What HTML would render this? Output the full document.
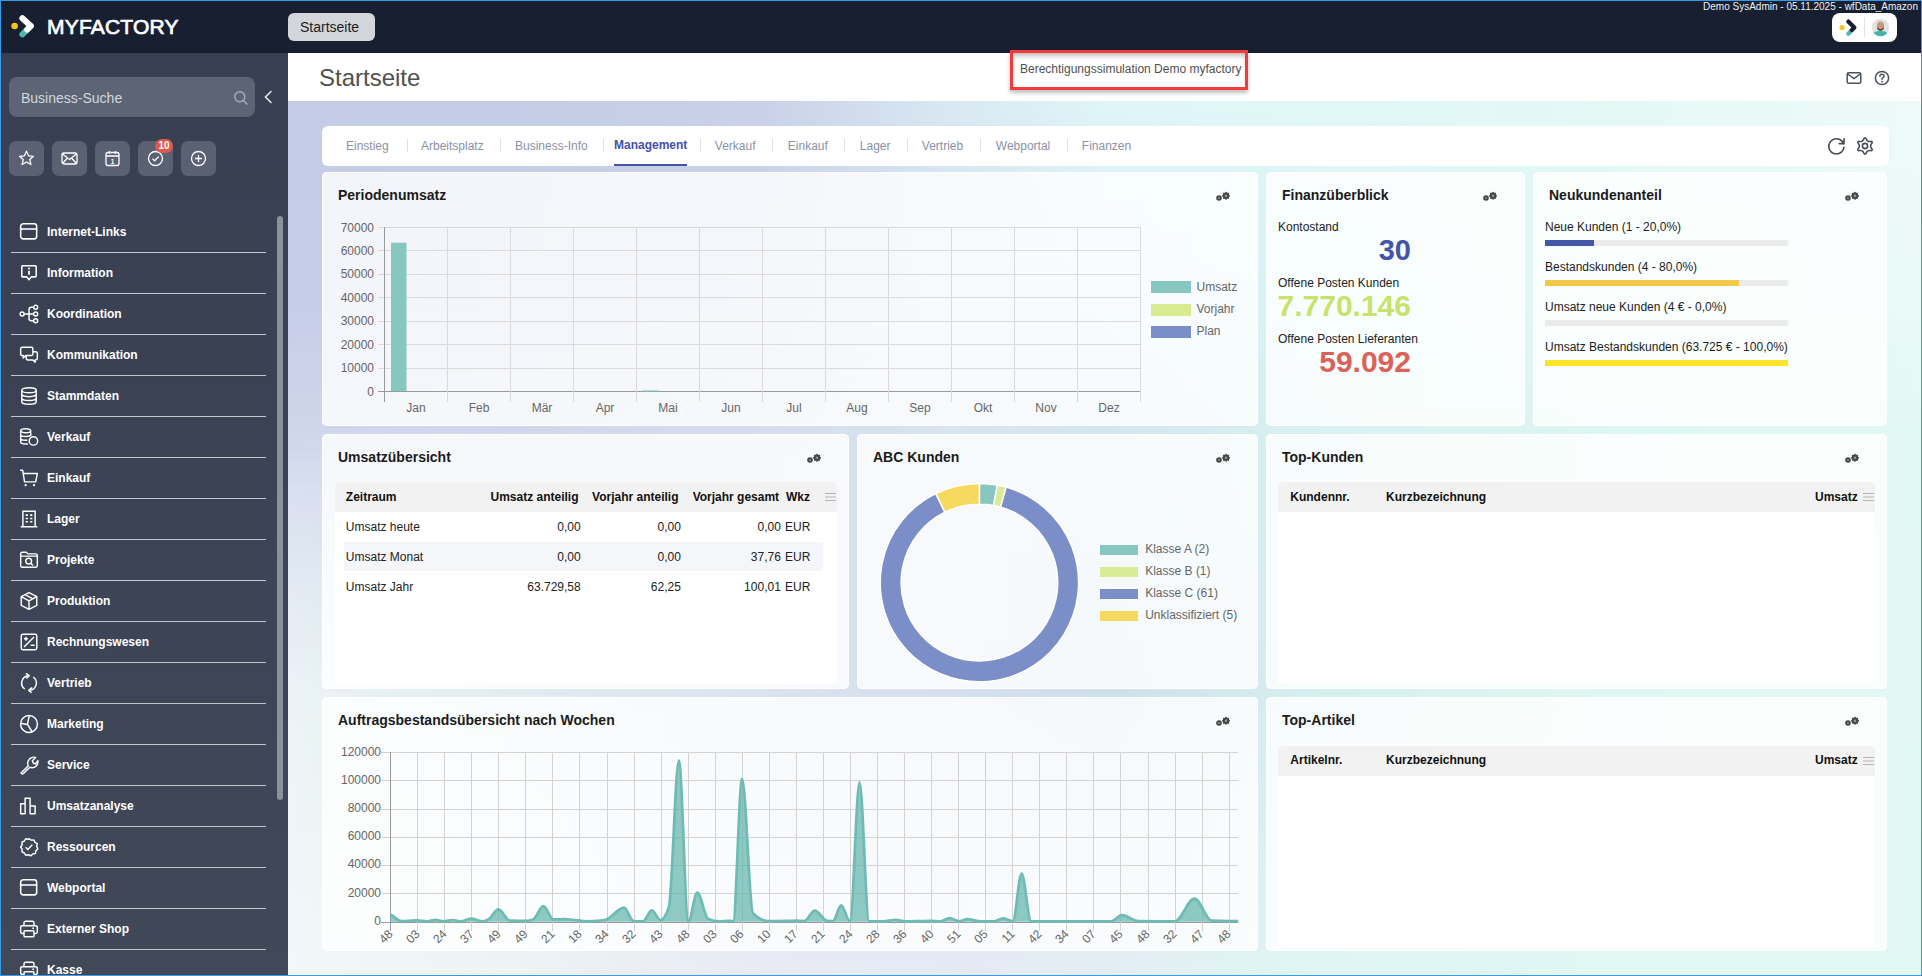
<!DOCTYPE html>
<html><head><meta charset="utf-8">
<style>
*{box-sizing:border-box;margin:0;padding:0}
html,body{width:1922px;height:976px;overflow:hidden;font-family:"Liberation Sans",sans-serif;background:#3a9be4}
#frame{position:absolute;left:1px;top:1px;width:1920px;height:974px;overflow:hidden;background:#394154}
.abs{position:absolute}
#hdr{position:absolute;left:0;top:0;width:1920px;height:52px;background:#171f31;z-index:5}
#side{position:absolute;left:0;top:51px;width:287px;height:923px;background:linear-gradient(180deg,#383f52 0%,#3a4254 40%,#414858 100%)}
#main{position:absolute;left:287px;top:51px;width:1633px;height:923px;overflow:hidden;background:#dfe7f0}
.mi{position:absolute;left:10px;width:255px;height:41px;border-bottom:1px solid #c3c6cc}
.mi svg{position:absolute;left:8px;top:9.5px}
.mi span{position:absolute;left:36px;top:13px;font-size:12px;font-weight:bold;color:#fff;white-space:nowrap}
.ib{position:absolute;top:89px;width:35px;height:35px;border-radius:7px;background:#5a6172}
.ib svg{position:absolute;left:8px;top:8px}
.card{position:absolute;background:rgba(255,255,255,0.8);border-radius:5px;box-shadow:inset 0 0 0 1px rgba(255,255,255,0.85)}
.ct{position:absolute;left:16px;top:15px;font-size:14px;font-weight:bold;color:#1b1b1b;white-space:nowrap}
</style></head><body>
<div id="frame">
<!-- HEADER -->
<div id="hdr">
  <svg class="abs" style="left:0px;top:0px" width="40" height="44" viewBox="0 0 40 44">
    <circle cx="13.6" cy="25" r="3.3" fill="#f5c518"/>
    <path d="M21.4 33.3 L29.8 25" stroke="#4fb8a8" stroke-width="6" stroke-linecap="round" fill="none"/>
    <path d="M21.4 17.2 L29.8 25 L26.2 28.6" stroke="#fff" stroke-width="6" stroke-linecap="round" stroke-linejoin="round" fill="none"/>
  </svg>
  <div class="abs" style="left:46px;top:14px;font-size:21px;font-weight:normal;color:#fff;letter-spacing:0.2px;-webkit-text-stroke:0.7px #fff">MYFACTORY</div>
  <div class="abs" style="left:287px;top:12px;width:87px;height:28px;border-radius:6px;background:#d3d5da;font-size:14px;color:#1d1d1d;text-align:left;padding-left:12px;line-height:28px">Startseite</div>
  <div class="abs" style="right:3px;top:0px;font-size:10px;color:#f0f0f0;white-space:nowrap">Demo SysAdmin - 05.11.2025 - wfData_Amazon</div>
  <div class="abs" style="left:1831px;top:12px;width:65px;height:29px;border-radius:8px;background:#fff">
    <svg class="abs" style="left:0px;top:0px" width="32" height="29" viewBox="0 0 32 29">
      <circle cx="10" cy="14.5" r="2.6" fill="#f5c518"/>
      <path d="M16.3 20.8 L22.3 14.5" stroke="#4fb8a8" stroke-width="4.2" stroke-linecap="round" fill="none"/>
      <path d="M16.3 8.6 L22.3 14.5 L19.8 17.1" stroke="#1a1f2f" stroke-width="4.2" stroke-linecap="round" stroke-linejoin="round" fill="none"/>
    </svg>
    <div class="abs" style="left:32px;top:4px;width:1px;height:20px;background:#e3e3e3"></div>
    <svg class="abs" style="left:39px;top:5px" width="19" height="19" viewBox="0 0 19 19">
      <defs><clipPath id="av"><circle cx="9.5" cy="9.5" r="8.7"/></clipPath></defs>
      <circle cx="9.5" cy="9.5" r="8.7" fill="#dfe3e3"/>
      <g clip-path="url(#av)">
        <path d="M1 19 Q2 12.5 9.5 12.8 Q17 12.5 18 19 Z" fill="#49b3a9"/>
        <ellipse cx="9.5" cy="8" rx="3.6" ry="4.5" fill="#c8987a"/>
        <path d="M6.3 9 Q9.5 14 12.7 9 L12.6 11 Q9.5 14.5 6.4 11 Z" fill="#3a2a22"/>
      </g>
    </svg>
  </div>
</div>
<!-- SIDEBAR -->
<div id="side">
  <div class="abs" style="left:8px;top:25px;width:246px;height:40px;border-radius:8px;background:#5d6475"></div>
  <div class="abs" style="left:20px;top:38px;font-size:14px;color:#d5d8de">Business-Suche</div>
  <svg class="abs" style="left:232px;top:38px" width="16" height="16" viewBox="0 0 16 16"><circle cx="6.8" cy="6.8" r="5" stroke="#a9aeb8" stroke-width="1.4" fill="none"/><path d="M10.5 10.5 L14 14" stroke="#a9aeb8" stroke-width="1.4" stroke-linecap="round"/></svg>
  <svg class="abs" style="left:262px;top:38px" width="10" height="14" viewBox="0 0 10 14"><path d="M8 1.5 L2.5 7 L8 12.5" stroke="#e6e8ec" stroke-width="1.6" fill="none" stroke-linecap="round"/></svg>
  <!-- icon buttons -->
  <div class="ib" style="left:8px"><svg width="19" height="19" viewBox="0 0 19 19"><path d="M9.5 2.2 L11.6 6.8 L16.5 7.3 L12.8 10.6 L13.9 15.5 L9.5 13 L5.1 15.5 L6.2 10.6 L2.5 7.3 L7.4 6.8 Z" stroke="#fff" stroke-width="1.3" fill="none" stroke-linejoin="round"/></svg></div>
  <div class="ib" style="left:51px"><svg width="19" height="19" viewBox="0 0 19 19"><rect x="2" y="4" width="15" height="11" rx="2" stroke="#fff" stroke-width="1.3" fill="none"/><path d="M2.5 5 L9.5 10.5 L16.5 5 M2.5 14.5 L7.5 9 M16.5 14.5 L11.5 9" stroke="#fff" stroke-width="1.3" fill="none"/></svg></div>
  <div class="ib" style="left:94px"><svg width="19" height="19" viewBox="0 0 19 19"><rect x="3" y="3.5" width="13" height="13" rx="2" stroke="#fff" stroke-width="1.3" fill="none"/><path d="M3 7 H16 M6.5 2 V5 M12.5 2 V5" stroke="#fff" stroke-width="1.3"/><text x="9.5" y="14.5" font-size="6.5" font-weight="bold" fill="#fff" text-anchor="middle" font-family="Liberation Sans">1</text></svg></div>
  <div class="ib" style="left:137px"><svg width="19" height="19" viewBox="0 0 19 19"><circle cx="9.5" cy="9.5" r="7" stroke="#fff" stroke-width="1.3" fill="none"/><path d="M6.5 9.8 L8.6 11.8 L12.6 7.6" stroke="#fff" stroke-width="1.3" fill="none"/></svg></div>
  <div class="abs" style="left:154px;top:87px;width:18px;height:14px;border-radius:8px;background:#df5a4e;color:#fff;font-size:10px;font-weight:bold;text-align:center;line-height:14px">10</div>
  <div class="ib" style="left:180px"><svg width="19" height="19" viewBox="0 0 19 19"><circle cx="9.5" cy="9.5" r="7" stroke="#fff" stroke-width="1.3" fill="none"/><path d="M9.5 6 V13 M6 9.5 H13" stroke="#fff" stroke-width="1.3"/></svg></div>
  <!-- scrollbar -->
  <div class="abs" style="left:276px;top:164px;width:6px;height:584px;border-radius:3px;background:#8b9099"></div>
  <div class="mi" style="top:160px"><svg width="20" height="20" viewBox="0 0 18 18"><rect x="1.5" y="1.6" width="14.4" height="13.6" rx="2.4" stroke="#fff" stroke-width="1.4" fill="none"/><path d="M1.5 6.3 H15.9" stroke="#fff" stroke-width="1.4"/></svg><span>Internet-Links</span></div>
  <div class="mi" style="top:201px"><svg width="20" height="20" viewBox="0 0 18 18"><path d="M3.5 2.5 H14.5 Q15.5 2.5 15.5 3.5 V11.5 Q15.5 12.5 14.5 12.5 H11 L9 15 L7 12.5 H3.5 Q2.5 12.5 2.5 11.5 V3.5 Q2.5 2.5 3.5 2.5 Z" stroke="#fff" stroke-width="1.4" fill="none" stroke-linejoin="round"/><path d="M9 7 V10.5" stroke="#fff" stroke-width="1.6"/><circle cx="9" cy="5" r="0.9" fill="#fff"/></svg><span>Information</span></div>
  <div class="mi" style="top:242px"><svg width="20" height="20" viewBox="0 0 18 18"><circle cx="2.8" cy="9" r="1.8" stroke="#fff" stroke-width="1.3" fill="none"/><circle cx="15" cy="3" r="1.8" stroke="#fff" stroke-width="1.3" fill="none"/><circle cx="15" cy="9" r="1.8" stroke="#fff" stroke-width="1.3" fill="none"/><circle cx="15" cy="15" r="1.8" stroke="#fff" stroke-width="1.3" fill="none"/><path d="M4.6 9 H13.2 M13.2 3 H11 Q9 3 9 5 V13 Q9 15 11 15 H13.2" stroke="#fff" stroke-width="1.3" fill="none"/></svg><span>Koordination</span></div>
  <div class="mi" style="top:283px"><svg width="20" height="20" viewBox="0 0 18 18"><path d="M3 2 H11 Q12.5 2 12.5 3.5 V8 Q12.5 9.5 11 9.5 H6 L3.8 11.8 V9.5 H3 Q1.5 9.5 1.5 8 V3.5 Q1.5 2 3 2 Z" stroke="#fff" stroke-width="1.3" fill="none" stroke-linejoin="round"/><path d="M12.5 6 H15 Q16.5 6 16.5 7.5 V12 Q16.5 13.5 15 13.5 H14.5 V15.5 L12.5 13.5 H8 Q6.5 13.5 6.5 12 V9.5" stroke="#fff" stroke-width="1.3" fill="none" stroke-linejoin="round"/></svg><span>Kommunikation</span></div>
  <div class="mi" style="top:324px"><svg width="20" height="20" viewBox="0 0 18 18"><ellipse cx="9" cy="3.8" rx="6.5" ry="2.3" stroke="#fff" stroke-width="1.3" fill="none"/><path d="M2.5 3.8 V14.2 Q2.5 16.5 9 16.5 Q15.5 16.5 15.5 14.2 V3.8 M2.5 7.3 Q2.5 9.6 9 9.6 Q15.5 9.6 15.5 7.3 M2.5 10.8 Q2.5 13.1 9 13.1 Q15.5 13.1 15.5 10.8" stroke="#fff" stroke-width="1.3" fill="none"/></svg><span>Stammdaten</span></div>
  <div class="mi" style="top:365px"><svg width="20" height="20" viewBox="0 0 18 18"><ellipse cx="6" cy="3.3" rx="4.5" ry="1.8" stroke="#fff" stroke-width="1.3" fill="none"/><path d="M1.5 3.3 V13.5 Q1.5 15.3 6 15.3 H8 M10.5 3.3 V8 M1.5 6.8 Q1.5 8.6 6 8.6 Q9 8.6 10.2 7.8 M1.5 10.2 Q1.5 12 6 12 H7.5" stroke="#fff" stroke-width="1.3" fill="none"/><circle cx="13" cy="12.5" r="3.8" stroke="#fff" stroke-width="1.3" fill="none"/></svg><span>Verkauf</span></div>
  <div class="mi" style="top:406px"><svg width="20" height="20" viewBox="0 0 18 18"><path d="M1 2 H3.3 L5 12.5 H15 L16.5 5 H4" stroke="#fff" stroke-width="1.3" fill="none" stroke-linejoin="round"/><circle cx="6" cy="15.5" r="1" fill="#fff"/><circle cx="13.5" cy="15.5" r="1" fill="#fff"/></svg><span>Einkauf</span></div>
  <div class="mi" style="top:447px"><svg width="20" height="20" viewBox="0 0 18 18"><path d="M3.5 16 V2 H14.5 V16 M1.5 16 H16.5" stroke="#fff" stroke-width="1.3" fill="none"/><path d="M6 5.5 H8 M10 5.5 H12 M6 8.5 H8 M10 8.5 H12 M6 11.5 H8 M10 11.5 H12" stroke="#fff" stroke-width="1.4"/></svg><span>Lager</span></div>
  <div class="mi" style="top:488px"><svg width="20" height="20" viewBox="0 0 18 18"><path d="M1.5 14 V3.5 Q1.5 2 3 2 H6.5 L8 3.5 H15 Q16.5 3.5 16.5 5 V14 Q16.5 15.5 15 15.5 H3 Q1.5 15.5 1.5 14 Z M1.5 5.5 H16.5" stroke="#fff" stroke-width="1.3" fill="none"/><circle cx="8.7" cy="10" r="2.6" stroke="#fff" stroke-width="1.3" fill="none"/><path d="M10.6 11.9 L12.6 13.9" stroke="#fff" stroke-width="1.3"/></svg><span>Projekte</span></div>
  <div class="mi" style="top:529px"><svg width="20" height="20" viewBox="0 0 18 18"><path d="M9 1.5 L16 5 V13 L9 16.5 L2 13 V5 Z M2 5 L9 8.8 L16 5 M9 8.8 V16.5 M5.5 3.2 L12.5 7" stroke="#fff" stroke-width="1.3" fill="none" stroke-linejoin="round"/></svg><span>Produktion</span></div>
  <div class="mi" style="top:570px"><svg width="20" height="20" viewBox="0 0 18 18"><rect x="2" y="2" width="14" height="14" rx="1.5" stroke="#fff" stroke-width="1.3" fill="none"/><path d="M4.5 13.5 L13.5 4.5 M4.5 6 H8 M6.25 4.2 V7.8 M10.5 12 H14" stroke="#fff" stroke-width="1.3"/></svg><span>Rechnungswesen</span></div>
  <div class="mi" style="top:611px"><svg width="20" height="20" viewBox="0 0 18 18"><path d="M8.42 2.43 A6.6 6.6 0 0 0 5.21 14.41" stroke="#fff" stroke-width="1.3" fill="none"/><path d="M9.58 15.57 A6.6 6.6 0 0 0 12.79 3.59" stroke="#fff" stroke-width="1.3" fill="none"/><path d="M6.6 0.6 L9.2 2.4 L7 4.6" stroke="#fff" stroke-width="1.3" fill="none" stroke-linejoin="round" stroke-linecap="round"/><path d="M11.4 13.4 L8.8 15.6 L11 17.4" stroke="#fff" stroke-width="1.3" fill="none" stroke-linejoin="round" stroke-linecap="round"/></svg><span>Vertrieb</span></div>
  <div class="mi" style="top:652px"><svg width="20" height="20" viewBox="0 0 18 18"><circle cx="9" cy="9" r="7.6" stroke="#fff" stroke-width="1.3" fill="none"/><path d="M9.2 1.4 L7.6 9.4 L1.5 8.4 M7.6 9.4 L12 16.2" stroke="#fff" stroke-width="1.3" fill="none" stroke-linejoin="round"/></svg><span>Marketing</span></div>
  <div class="mi" style="top:693px"><svg width="20" height="20" viewBox="0 0 18 18"><path d="M2.5 15.5 L8.2 9.8 Q7 6 9.5 3.5 Q12 1.2 15 2.2 L12 5.2 L12.8 7.2 L14.8 8 L17 5 Q17.5 8.5 15 10.5 Q12.5 12 9.7 11 L4 16.7 Q3 17.5 2.2 16.5 Q1.5 15.8 2.5 15.5 Z" stroke="#fff" stroke-width="1.3" fill="none" stroke-linejoin="round"/></svg><span>Service</span></div>
  <div class="mi" style="top:734px"><svg width="20" height="20" viewBox="0 0 18 18"><path d="M1.5 16 V7 H5.5 V16 Z M5.5 16 V2 H10 V16 M10 16 V9 H14.5 V16 Z" stroke="#fff" stroke-width="1.3" fill="none" stroke-linejoin="round"/></svg><span>Umsatzanalyse</span></div>
  <div class="mi" style="top:775px"><svg width="20" height="20" viewBox="0 0 18 18"><path d="M9 1.5 L11 2.8 L13.4 2.7 L14.4 4.8 L16.4 6 L16 8.5 L16.9 10.7 L15.2 12.4 L14.8 14.8 L12.4 15.2 L10.7 16.9 L8.5 16 L6 16.4 L4.8 14.4 L2.7 13.4 L2.8 11 L1.5 9 L2.8 7 L2.7 4.6 L4.8 3.6 L6 1.6 L8.5 2 Z" stroke="#fff" stroke-width="1.3" fill="none" stroke-linejoin="round"/><path d="M6 9.3 L8 11.2 L12 7" stroke="#fff" stroke-width="1.3" fill="none"/></svg><span>Ressourcen</span></div>
  <div class="mi" style="top:816px"><svg width="20" height="20" viewBox="0 0 18 18"><rect x="1.5" y="1.6" width="14.4" height="13.6" rx="2.4" stroke="#fff" stroke-width="1.4" fill="none"/><path d="M1.5 6.3 H15.9" stroke="#fff" stroke-width="1.4"/></svg><span>Webportal</span></div>
  <div class="mi" style="top:857px"><svg width="20" height="20" viewBox="0 0 18 18"><path d="M4.5 6 V3.5 Q4.5 2 6 2 H12 Q13.5 2 13.5 3.5 V6 M4.5 13 H3 Q1.5 13 1.5 11.5 V7.5 Q1.5 6 3 6 H15 Q16.5 6 16.5 7.5 V11.5 Q16.5 13 15 13 H13.5" stroke="#fff" stroke-width="1.3" fill="none"/><rect x="4.5" y="10.5" width="9" height="5.5" rx="1" stroke="#fff" stroke-width="1.3" fill="none"/><path d="M12 8.3 H13.5" stroke="#fff" stroke-width="1.3"/></svg><span>Externer Shop</span></div>
  <div class="mi" style="top:898px"><svg width="20" height="20" viewBox="0 0 18 18"><path d="M4.5 6 V3.5 Q4.5 2 6 2 H12 Q13.5 2 13.5 3.5 V6 M4.5 13 H3 Q1.5 13 1.5 11.5 V7.5 Q1.5 6 3 6 H15 Q16.5 6 16.5 7.5 V11.5 Q16.5 13 15 13 H13.5" stroke="#fff" stroke-width="1.3" fill="none"/><rect x="4.5" y="10.5" width="9" height="5.5" rx="1" stroke="#fff" stroke-width="1.3" fill="none"/><path d="M12 8.3 H13.5" stroke="#fff" stroke-width="1.3"/></svg><span>Kasse</span></div>
  <!--MENU-->
</div>
<!-- MAIN -->
<div id="main">

<div class="abs" style="left:0;top:0px;width:1633px;height:10px;background:linear-gradient(90deg,rgb(197,205,230) 0px,rgb(197,205,230) 212px,rgb(201,209,232) 472px,rgb(217,232,242) 662px,rgb(224,245,247) 817px,rgb(224,247,247) 1012px,rgb(228,248,246) 1312px,rgb(238,250,250) 1634px)"></div>
<div class="abs" style="left:0;top:10px;width:1633px;height:10px;background:linear-gradient(90deg,rgb(197,205,230) 0px,rgb(197,205,230) 212px,rgb(201,209,232) 472px,rgb(217,232,242) 662px,rgb(224,245,247) 817px,rgb(224,247,247) 1012px,rgb(228,248,246) 1312px,rgb(238,250,250) 1634px)"></div>
<div class="abs" style="left:0;top:20px;width:1633px;height:10px;background:linear-gradient(90deg,rgb(197,205,230) 0px,rgb(197,205,230) 212px,rgb(201,209,232) 472px,rgb(217,232,242) 662px,rgb(224,245,247) 817px,rgb(224,247,247) 1012px,rgb(228,248,246) 1312px,rgb(238,250,250) 1634px)"></div>
<div class="abs" style="left:0;top:30px;width:1633px;height:10px;background:linear-gradient(90deg,rgb(197,205,230) 0px,rgb(197,205,230) 212px,rgb(201,209,232) 472px,rgb(217,232,242) 662px,rgb(224,245,247) 817px,rgb(224,247,247) 1012px,rgb(228,248,246) 1312px,rgb(238,250,250) 1634px)"></div>
<div class="abs" style="left:0;top:40px;width:1633px;height:10px;background:linear-gradient(90deg,rgb(197,205,230) 0px,rgb(197,205,230) 212px,rgb(201,209,232) 472px,rgb(217,232,242) 662px,rgb(224,245,247) 817px,rgb(224,247,247) 1012px,rgb(228,248,246) 1312px,rgb(238,250,250) 1634px)"></div>
<div class="abs" style="left:0;top:50px;width:1633px;height:10px;background:linear-gradient(90deg,rgb(197,205,230) 0px,rgb(197,205,230) 212px,rgb(201,209,232) 472px,rgb(217,232,242) 662px,rgb(224,245,247) 817px,rgb(224,247,247) 1012px,rgb(228,248,246) 1312px,rgb(238,250,250) 1634px)"></div>
<div class="abs" style="left:0;top:60px;width:1633px;height:10px;background:linear-gradient(90deg,rgb(197,205,230) 0px,rgb(197,205,230) 212px,rgb(201,209,232) 472px,rgb(217,232,242) 662px,rgb(223,244,247) 817px,rgb(224,247,247) 1012px,rgb(228,248,246) 1312px,rgb(238,250,250) 1634px)"></div>
<div class="abs" style="left:0;top:70px;width:1633px;height:10px;background:linear-gradient(90deg,rgb(197,205,230) 0px,rgb(197,205,230) 212px,rgb(202,209,232) 472px,rgb(216,231,242) 662px,rgb(223,244,246) 817px,rgb(223,246,246) 1012px,rgb(228,248,246) 1312px,rgb(237,250,250) 1634px)"></div>
<div class="abs" style="left:0;top:80px;width:1633px;height:10px;background:linear-gradient(90deg,rgb(197,205,230) 0px,rgb(198,205,230) 212px,rgb(202,210,232) 472px,rgb(216,231,241) 662px,rgb(223,244,246) 817px,rgb(223,246,246) 1012px,rgb(228,248,246) 1312px,rgb(237,250,250) 1634px)"></div>
<div class="abs" style="left:0;top:90px;width:1633px;height:10px;background:linear-gradient(90deg,rgb(197,205,230) 0px,rgb(198,205,230) 212px,rgb(202,210,232) 472px,rgb(216,231,241) 662px,rgb(222,243,246) 817px,rgb(223,246,246) 1012px,rgb(228,248,246) 1312px,rgb(237,250,250) 1634px)"></div>
<div class="abs" style="left:0;top:100px;width:1633px;height:10px;background:linear-gradient(90deg,rgb(197,205,230) 0px,rgb(198,206,231) 212px,rgb(202,210,233) 472px,rgb(216,230,241) 662px,rgb(222,243,246) 817px,rgb(222,246,246) 1012px,rgb(227,248,246) 1312px,rgb(237,250,249) 1634px)"></div>
<div class="abs" style="left:0;top:110px;width:1633px;height:10px;background:linear-gradient(90deg,rgb(197,205,230) 0px,rgb(198,206,231) 212px,rgb(202,210,233) 472px,rgb(216,230,241) 662px,rgb(222,243,246) 817px,rgb(222,246,246) 1012px,rgb(227,248,246) 1312px,rgb(237,250,249) 1634px)"></div>
<div class="abs" style="left:0;top:120px;width:1633px;height:10px;background:linear-gradient(90deg,rgb(197,205,230) 0px,rgb(198,206,231) 212px,rgb(203,210,233) 472px,rgb(215,230,241) 662px,rgb(221,242,245) 817px,rgb(222,245,245) 1012px,rgb(227,248,246) 1312px,rgb(236,250,249) 1634px)"></div>
<div class="abs" style="left:0;top:130px;width:1633px;height:10px;background:linear-gradient(90deg,rgb(197,205,230) 0px,rgb(198,206,231) 212px,rgb(203,210,233) 472px,rgb(215,229,241) 662px,rgb(221,242,245) 817px,rgb(221,245,245) 1012px,rgb(227,248,246) 1312px,rgb(236,250,249) 1634px)"></div>
<div class="abs" style="left:0;top:140px;width:1633px;height:10px;background:linear-gradient(90deg,rgb(197,205,230) 0px,rgb(198,206,231) 212px,rgb(203,210,233) 472px,rgb(215,229,241) 662px,rgb(221,242,245) 817px,rgb(221,245,245) 1012px,rgb(227,248,246) 1312px,rgb(236,250,249) 1634px)"></div>
<div class="abs" style="left:0;top:150px;width:1633px;height:10px;background:linear-gradient(90deg,rgb(198,205,231) 0px,rgb(199,206,231) 212px,rgb(203,211,233) 472px,rgb(215,229,240) 662px,rgb(220,241,245) 817px,rgb(221,245,245) 1012px,rgb(227,248,245) 1312px,rgb(236,250,249) 1634px)"></div>
<div class="abs" style="left:0;top:160px;width:1633px;height:10px;background:linear-gradient(90deg,rgb(198,205,231) 0px,rgb(199,206,231) 212px,rgb(203,211,233) 472px,rgb(215,229,240) 662px,rgb(220,241,245) 817px,rgb(221,245,245) 1012px,rgb(227,248,245) 1312px,rgb(236,250,249) 1634px)"></div>
<div class="abs" style="left:0;top:170px;width:1633px;height:10px;background:linear-gradient(90deg,rgb(198,205,231) 0px,rgb(199,206,231) 212px,rgb(204,211,233) 472px,rgb(214,228,240) 662px,rgb(220,241,244) 817px,rgb(220,244,244) 1012px,rgb(227,248,245) 1312px,rgb(235,250,249) 1634px)"></div>
<div class="abs" style="left:0;top:180px;width:1633px;height:10px;background:linear-gradient(90deg,rgb(198,205,231) 0px,rgb(199,206,231) 212px,rgb(204,211,233) 472px,rgb(214,228,240) 662px,rgb(219,240,244) 817px,rgb(220,244,244) 1012px,rgb(227,248,245) 1312px,rgb(235,250,249) 1634px)"></div>
<div class="abs" style="left:0;top:190px;width:1633px;height:10px;background:linear-gradient(90deg,rgb(198,205,231) 0px,rgb(199,206,231) 212px,rgb(204,211,233) 472px,rgb(214,228,240) 662px,rgb(219,240,244) 817px,rgb(220,244,244) 1012px,rgb(227,248,245) 1312px,rgb(235,250,249) 1634px)"></div>
<div class="abs" style="left:0;top:200px;width:1633px;height:10px;background:linear-gradient(90deg,rgb(198,205,231) 0px,rgb(199,207,232) 212px,rgb(204,211,234) 472px,rgb(214,227,240) 662px,rgb(219,240,244) 817px,rgb(219,244,244) 1012px,rgb(226,248,245) 1312px,rgb(235,250,248) 1634px)"></div>
<div class="abs" style="left:0;top:210px;width:1633px;height:10px;background:linear-gradient(90deg,rgb(198,205,231) 0px,rgb(200,207,232) 212px,rgb(204,212,234) 472px,rgb(214,227,239) 662px,rgb(218,239,244) 817px,rgb(219,244,244) 1012px,rgb(226,248,245) 1312px,rgb(235,250,248) 1634px)"></div>
<div class="abs" style="left:0;top:220px;width:1633px;height:10px;background:linear-gradient(90deg,rgb(198,205,231) 0px,rgb(200,207,232) 212px,rgb(205,212,234) 472px,rgb(213,227,239) 662px,rgb(218,239,243) 817px,rgb(219,243,243) 1012px,rgb(226,248,245) 1312px,rgb(234,250,248) 1634px)"></div>
<div class="abs" style="left:0;top:230px;width:1633px;height:10px;background:linear-gradient(90deg,rgb(198,205,231) 0px,rgb(200,207,232) 212px,rgb(205,212,234) 472px,rgb(213,226,239) 662px,rgb(217,238,243) 817px,rgb(218,243,243) 1012px,rgb(226,248,245) 1312px,rgb(234,250,248) 1634px)"></div>
<div class="abs" style="left:0;top:240px;width:1633px;height:10px;background:linear-gradient(90deg,rgb(198,205,231) 0px,rgb(200,207,232) 212px,rgb(205,212,234) 472px,rgb(213,226,239) 662px,rgb(217,238,243) 817px,rgb(218,243,243) 1012px,rgb(226,248,245) 1312px,rgb(234,250,248) 1634px)"></div>
<div class="abs" style="left:0;top:250px;width:1633px;height:10px;background:linear-gradient(90deg,rgb(198,205,231) 0px,rgb(200,207,232) 212px,rgb(205,212,234) 472px,rgb(213,226,239) 662px,rgb(217,238,243) 817px,rgb(218,243,243) 1012px,rgb(226,248,245) 1312px,rgb(234,250,248) 1634px)"></div>
<div class="abs" style="left:0;top:260px;width:1633px;height:10px;background:linear-gradient(90deg,rgb(199,206,231) 0px,rgb(201,208,233) 212px,rgb(206,213,235) 472px,rgb(213,226,239) 662px,rgb(216,237,242) 817px,rgb(218,243,243) 1012px,rgb(225,248,245) 1312px,rgb(233,250,247) 1634px)"></div>
<div class="abs" style="left:0;top:270px;width:1633px;height:10px;background:linear-gradient(90deg,rgb(200,207,232) 0px,rgb(202,209,233) 212px,rgb(207,214,235) 472px,rgb(214,226,239) 662px,rgb(216,236,242) 817px,rgb(218,242,242) 1012px,rgb(225,248,244) 1312px,rgb(232,250,247) 1634px)"></div>
<div class="abs" style="left:0;top:280px;width:1633px;height:10px;background:linear-gradient(90deg,rgb(201,207,232) 0px,rgb(202,209,233) 212px,rgb(207,214,235) 472px,rgb(214,227,239) 662px,rgb(215,236,242) 817px,rgb(217,242,242) 1012px,rgb(225,247,244) 1312px,rgb(232,249,247) 1634px)"></div>
<div class="abs" style="left:0;top:290px;width:1633px;height:10px;background:linear-gradient(90deg,rgb(201,208,232) 0px,rgb(203,210,233) 212px,rgb(208,215,235) 472px,rgb(214,227,239) 662px,rgb(215,235,241) 817px,rgb(217,242,242) 1012px,rgb(225,247,244) 1312px,rgb(231,249,247) 1634px)"></div>
<div class="abs" style="left:0;top:300px;width:1633px;height:10px;background:linear-gradient(90deg,rgb(202,209,232) 0px,rgb(204,211,234) 212px,rgb(209,216,236) 472px,rgb(214,227,239) 662px,rgb(214,234,241) 817px,rgb(217,242,242) 1012px,rgb(224,247,244) 1312px,rgb(230,249,246) 1634px)"></div>
<div class="abs" style="left:0;top:310px;width:1633px;height:10px;background:linear-gradient(90deg,rgb(203,209,233) 0px,rgb(204,211,234) 212px,rgb(209,216,236) 472px,rgb(215,227,239) 662px,rgb(214,234,240) 817px,rgb(217,241,241) 1012px,rgb(224,247,243) 1312px,rgb(230,249,246) 1634px)"></div>
<div class="abs" style="left:0;top:320px;width:1633px;height:10px;background:linear-gradient(90deg,rgb(203,210,233) 0px,rgb(205,212,234) 212px,rgb(210,217,236) 472px,rgb(215,227,239) 662px,rgb(213,233,240) 817px,rgb(217,241,241) 1012px,rgb(224,247,243) 1312px,rgb(229,249,246) 1634px)"></div>
<div class="abs" style="left:0;top:330px;width:1633px;height:10px;background:linear-gradient(90deg,rgb(204,210,233) 0px,rgb(205,212,235) 212px,rgb(210,217,237) 472px,rgb(215,227,239) 662px,rgb(213,233,240) 817px,rgb(217,241,241) 1012px,rgb(223,247,243) 1312px,rgb(229,249,245) 1634px)"></div>
<div class="abs" style="left:0;top:340px;width:1633px;height:10px;background:linear-gradient(90deg,rgb(205,211,233) 0px,rgb(206,213,235) 212px,rgb(211,218,237) 472px,rgb(215,227,239) 662px,rgb(213,232,239) 817px,rgb(217,241,241) 1012px,rgb(223,247,243) 1312px,rgb(228,249,245) 1634px)"></div>
<div class="abs" style="left:0;top:350px;width:1633px;height:10px;background:linear-gradient(90deg,rgb(205,212,233) 0px,rgb(207,214,235) 212px,rgb(212,219,237) 472px,rgb(215,228,239) 662px,rgb(212,231,239) 817px,rgb(216,241,241) 1012px,rgb(223,246,243) 1312px,rgb(227,248,245) 1634px)"></div>
<div class="abs" style="left:0;top:360px;width:1633px;height:10px;background:linear-gradient(90deg,rgb(206,212,234) 0px,rgb(207,214,236) 212px,rgb(212,219,238) 472px,rgb(216,228,239) 662px,rgb(212,231,238) 817px,rgb(216,240,240) 1012px,rgb(222,246,242) 1312px,rgb(227,248,244) 1634px)"></div>
<div class="abs" style="left:0;top:370px;width:1633px;height:10px;background:linear-gradient(90deg,rgb(207,213,234) 0px,rgb(208,215,236) 212px,rgb(213,220,238) 472px,rgb(216,228,239) 662px,rgb(211,230,238) 817px,rgb(216,240,240) 1012px,rgb(222,246,242) 1312px,rgb(226,248,244) 1634px)"></div>
<div class="abs" style="left:0;top:380px;width:1633px;height:10px;background:linear-gradient(90deg,rgb(208,214,235) 0px,rgb(209,216,236) 212px,rgb(213,220,238) 472px,rgb(216,228,239) 662px,rgb(211,230,238) 817px,rgb(216,240,240) 1012px,rgb(222,246,242) 1312px,rgb(226,248,244) 1634px)"></div>
<div class="abs" style="left:0;top:390px;width:1633px;height:10px;background:linear-gradient(90deg,rgb(210,216,236) 0px,rgb(210,217,237) 212px,rgb(213,220,238) 472px,rgb(216,228,239) 662px,rgb(211,230,238) 817px,rgb(216,240,240) 1012px,rgb(222,246,242) 1312px,rgb(226,248,244) 1634px)"></div>
<div class="abs" style="left:0;top:400px;width:1633px;height:10px;background:linear-gradient(90deg,rgb(212,218,237) 0px,rgb(211,218,237) 212px,rgb(214,221,238) 472px,rgb(216,227,239) 662px,rgb(210,229,237) 817px,rgb(216,240,240) 1012px,rgb(222,246,242) 1312px,rgb(226,248,244) 1634px)"></div>
<div class="abs" style="left:0;top:410px;width:1633px;height:10px;background:linear-gradient(90deg,rgb(214,220,238) 0px,rgb(212,219,237) 212px,rgb(214,221,238) 472px,rgb(216,227,239) 662px,rgb(210,229,237) 817px,rgb(216,240,240) 1012px,rgb(222,246,242) 1312px,rgb(226,248,244) 1634px)"></div>
<div class="abs" style="left:0;top:420px;width:1633px;height:10px;background:linear-gradient(90deg,rgb(215,221,239) 0px,rgb(213,220,238) 212px,rgb(214,221,238) 472px,rgb(216,227,239) 662px,rgb(210,229,237) 817px,rgb(216,240,240) 1012px,rgb(222,246,242) 1312px,rgb(226,248,244) 1634px)"></div>
<div class="abs" style="left:0;top:430px;width:1633px;height:10px;background:linear-gradient(90deg,rgb(217,223,239) 0px,rgb(213,221,238) 212px,rgb(214,221,238) 472px,rgb(216,227,239) 662px,rgb(210,229,237) 817px,rgb(216,240,240) 1012px,rgb(222,246,242) 1312px,rgb(226,248,244) 1634px)"></div>
<div class="abs" style="left:0;top:440px;width:1633px;height:10px;background:linear-gradient(90deg,rgb(218,224,240) 0px,rgb(214,222,238) 212px,rgb(214,222,238) 472px,rgb(216,227,239) 662px,rgb(210,228,237) 817px,rgb(216,240,240) 1012px,rgb(222,246,242) 1312px,rgb(226,248,244) 1634px)"></div>
<div class="abs" style="left:0;top:450px;width:1633px;height:10px;background:linear-gradient(90deg,rgb(219,225,240) 0px,rgb(215,222,239) 212px,rgb(215,222,238) 472px,rgb(215,226,239) 662px,rgb(209,228,236) 817px,rgb(216,240,240) 1012px,rgb(222,246,242) 1312px,rgb(226,248,244) 1634px)"></div>
<div class="abs" style="left:0;top:460px;width:1633px;height:10px;background:linear-gradient(90deg,rgb(220,226,240) 0px,rgb(216,223,239) 212px,rgb(215,222,238) 472px,rgb(215,226,239) 662px,rgb(209,228,236) 817px,rgb(216,240,240) 1012px,rgb(222,246,242) 1312px,rgb(226,248,244) 1634px)"></div>
<div class="abs" style="left:0;top:470px;width:1633px;height:10px;background:linear-gradient(90deg,rgb(221,228,240) 0px,rgb(216,224,239) 212px,rgb(215,222,238) 472px,rgb(215,226,239) 662px,rgb(209,228,236) 817px,rgb(216,240,240) 1012px,rgb(222,246,242) 1312px,rgb(226,248,244) 1634px)"></div>
<div class="abs" style="left:0;top:480px;width:1633px;height:10px;background:linear-gradient(90deg,rgb(222,229,241) 0px,rgb(217,225,239) 212px,rgb(215,223,239) 472px,rgb(215,226,238) 662px,rgb(209,227,236) 817px,rgb(215,239,240) 1012px,rgb(223,246,242) 1312px,rgb(227,248,244) 1634px)"></div>
<div class="abs" style="left:0;top:490px;width:1633px;height:10px;background:linear-gradient(90deg,rgb(223,230,241) 0px,rgb(218,226,239) 212px,rgb(215,223,239) 472px,rgb(215,226,238) 662px,rgb(209,227,236) 817px,rgb(215,239,240) 1012px,rgb(223,246,242) 1312px,rgb(227,248,244) 1634px)"></div>
<div class="abs" style="left:0;top:500px;width:1633px;height:10px;background:linear-gradient(90deg,rgb(224,231,241) 0px,rgb(218,227,240) 212px,rgb(216,223,239) 472px,rgb(214,225,238) 662px,rgb(208,227,235) 817px,rgb(215,239,240) 1012px,rgb(223,246,242) 1312px,rgb(227,248,244) 1634px)"></div>
<div class="abs" style="left:0;top:510px;width:1633px;height:10px;background:linear-gradient(90deg,rgb(225,232,242) 0px,rgb(219,228,240) 212px,rgb(216,224,239) 472px,rgb(214,225,238) 662px,rgb(208,226,235) 817px,rgb(215,239,240) 1012px,rgb(223,246,242) 1312px,rgb(227,248,244) 1634px)"></div>
<div class="abs" style="left:0;top:520px;width:1633px;height:10px;background:linear-gradient(90deg,rgb(226,233,242) 0px,rgb(220,229,240) 212px,rgb(216,224,239) 472px,rgb(214,225,238) 662px,rgb(208,226,235) 817px,rgb(215,239,240) 1012px,rgb(223,246,242) 1312px,rgb(227,248,244) 1634px)"></div>
<div class="abs" style="left:0;top:530px;width:1633px;height:10px;background:linear-gradient(90deg,rgb(227,234,242) 0px,rgb(220,229,240) 212px,rgb(216,224,239) 472px,rgb(214,225,238) 662px,rgb(208,226,235) 817px,rgb(215,239,240) 1012px,rgb(223,246,242) 1312px,rgb(227,248,244) 1634px)"></div>
<div class="abs" style="left:0;top:540px;width:1633px;height:10px;background:linear-gradient(90deg,rgb(228,235,242) 0px,rgb(221,230,240) 212px,rgb(216,224,239) 472px,rgb(214,225,238) 662px,rgb(208,226,235) 817px,rgb(215,239,240) 1012px,rgb(223,246,242) 1312px,rgb(227,248,244) 1634px)"></div>
<div class="abs" style="left:0;top:550px;width:1633px;height:10px;background:linear-gradient(90deg,rgb(229,236,243) 0px,rgb(221,231,240) 212px,rgb(216,225,239) 472px,rgb(214,225,238) 662px,rgb(208,225,235) 817px,rgb(215,239,240) 1012px,rgb(223,246,242) 1312px,rgb(227,248,244) 1634px)"></div>
<div class="abs" style="left:0;top:560px;width:1633px;height:10px;background:linear-gradient(90deg,rgb(230,237,243) 0px,rgb(222,231,240) 212px,rgb(217,225,239) 472px,rgb(214,224,238) 662px,rgb(208,225,235) 817px,rgb(215,239,240) 1012px,rgb(223,246,242) 1312px,rgb(227,248,244) 1634px)"></div>
<div class="abs" style="left:0;top:570px;width:1633px;height:10px;background:linear-gradient(90deg,rgb(230,238,243) 0px,rgb(222,232,240) 212px,rgb(217,225,239) 472px,rgb(214,224,238) 662px,rgb(208,225,235) 817px,rgb(215,239,240) 1012px,rgb(223,246,242) 1312px,rgb(227,248,244) 1634px)"></div>
<div class="abs" style="left:0;top:580px;width:1633px;height:10px;background:linear-gradient(90deg,rgb(231,238,243) 0px,rgb(223,232,240) 212px,rgb(217,225,239) 472px,rgb(214,224,238) 662px,rgb(208,225,235) 817px,rgb(215,239,240) 1012px,rgb(223,246,242) 1312px,rgb(227,248,244) 1634px)"></div>
<div class="abs" style="left:0;top:590px;width:1633px;height:10px;background:linear-gradient(90deg,rgb(232,239,244) 0px,rgb(224,233,241) 212px,rgb(217,226,239) 472px,rgb(213,224,238) 662px,rgb(207,224,234) 817px,rgb(215,238,240) 1012px,rgb(223,246,242) 1312px,rgb(227,248,244) 1634px)"></div>
<div class="abs" style="left:0;top:600px;width:1633px;height:10px;background:linear-gradient(90deg,rgb(232,240,244) 0px,rgb(224,234,241) 212px,rgb(217,226,239) 472px,rgb(213,224,238) 662px,rgb(207,224,234) 817px,rgb(215,238,240) 1012px,rgb(223,246,242) 1312px,rgb(227,248,244) 1634px)"></div>
<div class="abs" style="left:0;top:610px;width:1633px;height:10px;background:linear-gradient(90deg,rgb(233,241,244) 0px,rgb(225,234,241) 212px,rgb(218,226,239) 472px,rgb(213,223,238) 662px,rgb(207,224,234) 817px,rgb(215,238,240) 1012px,rgb(223,246,242) 1312px,rgb(227,248,244) 1634px)"></div>
<div class="abs" style="left:0;top:620px;width:1633px;height:10px;background:linear-gradient(90deg,rgb(234,242,245) 0px,rgb(225,235,241) 212px,rgb(218,227,239) 472px,rgb(213,223,238) 662px,rgb(207,223,234) 817px,rgb(215,238,240) 1012px,rgb(223,246,242) 1312px,rgb(227,248,244) 1634px)"></div>
<div class="abs" style="left:0;top:630px;width:1633px;height:10px;background:linear-gradient(90deg,rgb(235,243,245) 0px,rgb(226,236,241) 212px,rgb(218,227,239) 472px,rgb(213,223,238) 662px,rgb(207,223,234) 817px,rgb(215,238,240) 1012px,rgb(223,246,242) 1312px,rgb(227,248,244) 1634px)"></div>
<div class="abs" style="left:0;top:640px;width:1633px;height:10px;background:linear-gradient(90deg,rgb(235,243,245) 0px,rgb(226,236,241) 212px,rgb(218,227,239) 472px,rgb(213,223,238) 662px,rgb(207,223,234) 817px,rgb(215,238,240) 1012px,rgb(223,246,242) 1312px,rgb(227,248,244) 1634px)"></div>
<div class="abs" style="left:0;top:650px;width:1633px;height:10px;background:linear-gradient(90deg,rgb(235,243,245) 0px,rgb(227,236,241) 212px,rgb(219,227,239) 472px,rgb(214,224,238) 662px,rgb(208,224,234) 817px,rgb(215,238,240) 1012px,rgb(223,246,242) 1312px,rgb(227,248,244) 1634px)"></div>
<div class="abs" style="left:0;top:660px;width:1633px;height:10px;background:linear-gradient(90deg,rgb(236,243,245) 0px,rgb(227,237,241) 212px,rgb(219,228,239) 472px,rgb(214,224,239) 662px,rgb(209,224,235) 817px,rgb(216,239,240) 1012px,rgb(223,246,242) 1312px,rgb(227,248,244) 1634px)"></div>
<div class="abs" style="left:0;top:670px;width:1633px;height:10px;background:linear-gradient(90deg,rgb(236,244,245) 0px,rgb(227,237,241) 212px,rgb(220,228,240) 472px,rgb(215,224,239) 662px,rgb(210,225,235) 817px,rgb(216,239,240) 1012px,rgb(223,246,242) 1312px,rgb(227,248,244) 1634px)"></div>
<div class="abs" style="left:0;top:680px;width:1633px;height:10px;background:linear-gradient(90deg,rgb(236,244,245) 0px,rgb(228,237,242) 212px,rgb(220,228,240) 472px,rgb(216,225,239) 662px,rgb(210,225,236) 817px,rgb(216,239,241) 1012px,rgb(223,246,242) 1312px,rgb(227,248,244) 1634px)"></div>
<div class="abs" style="left:0;top:690px;width:1633px;height:10px;background:linear-gradient(90deg,rgb(236,244,246) 0px,rgb(228,237,242) 212px,rgb(221,229,240) 472px,rgb(216,225,239) 662px,rgb(211,226,236) 817px,rgb(217,239,241) 1012px,rgb(223,246,242) 1312px,rgb(226,248,244) 1634px)"></div>
<div class="abs" style="left:0;top:700px;width:1633px;height:10px;background:linear-gradient(90deg,rgb(236,244,246) 0px,rgb(229,238,242) 212px,rgb(221,229,240) 472px,rgb(217,225,239) 662px,rgb(212,226,236) 817px,rgb(217,240,241) 1012px,rgb(223,246,242) 1312px,rgb(226,248,244) 1634px)"></div>
<div class="abs" style="left:0;top:710px;width:1633px;height:10px;background:linear-gradient(90deg,rgb(237,244,246) 0px,rgb(229,238,242) 212px,rgb(222,229,240) 472px,rgb(217,226,240) 662px,rgb(212,227,237) 817px,rgb(217,240,241) 1012px,rgb(223,246,243) 1312px,rgb(226,248,244) 1634px)"></div>
<div class="abs" style="left:0;top:720px;width:1633px;height:10px;background:linear-gradient(90deg,rgb(237,244,246) 0px,rgb(230,238,242) 212px,rgb(222,229,240) 472px,rgb(218,226,240) 662px,rgb(213,227,237) 817px,rgb(218,240,241) 1012px,rgb(223,246,243) 1312px,rgb(226,248,244) 1634px)"></div>
<div class="abs" style="left:0;top:730px;width:1633px;height:10px;background:linear-gradient(90deg,rgb(237,245,246) 0px,rgb(230,238,242) 212px,rgb(223,230,241) 472px,rgb(219,227,240) 662px,rgb(214,228,237) 817px,rgb(218,240,241) 1012px,rgb(223,246,243) 1312px,rgb(226,248,244) 1634px)"></div>
<div class="abs" style="left:0;top:740px;width:1633px;height:10px;background:linear-gradient(90deg,rgb(237,245,246) 0px,rgb(230,239,242) 212px,rgb(223,230,241) 472px,rgb(219,227,240) 662px,rgb(215,229,238) 817px,rgb(218,241,241) 1012px,rgb(223,246,243) 1312px,rgb(226,248,244) 1634px)"></div>
<div class="abs" style="left:0;top:750px;width:1633px;height:10px;background:linear-gradient(90deg,rgb(237,245,246) 0px,rgb(231,239,243) 212px,rgb(224,230,241) 472px,rgb(220,227,240) 662px,rgb(215,229,238) 817px,rgb(219,241,242) 1012px,rgb(223,246,243) 1312px,rgb(226,248,244) 1634px)"></div>
<div class="abs" style="left:0;top:760px;width:1633px;height:10px;background:linear-gradient(90deg,rgb(238,245,246) 0px,rgb(231,239,243) 212px,rgb(224,231,241) 472px,rgb(220,228,241) 662px,rgb(216,230,238) 817px,rgb(219,241,242) 1012px,rgb(223,246,243) 1312px,rgb(226,248,244) 1634px)"></div>
<div class="abs" style="left:0;top:770px;width:1633px;height:10px;background:linear-gradient(90deg,rgb(238,245,246) 0px,rgb(232,239,243) 212px,rgb(225,231,241) 472px,rgb(221,228,241) 662px,rgb(217,230,239) 817px,rgb(219,241,242) 1012px,rgb(223,246,243) 1312px,rgb(226,248,244) 1634px)"></div>
<div class="abs" style="left:0;top:780px;width:1633px;height:10px;background:linear-gradient(90deg,rgb(238,246,247) 0px,rgb(232,240,243) 212px,rgb(225,231,242) 472px,rgb(222,229,241) 662px,rgb(218,231,239) 817px,rgb(220,242,242) 1012px,rgb(224,247,243) 1312px,rgb(225,247,244) 1634px)"></div>
<div class="abs" style="left:0;top:790px;width:1633px;height:10px;background:linear-gradient(90deg,rgb(238,246,247) 0px,rgb(233,240,243) 212px,rgb(226,231,242) 472px,rgb(222,229,241) 662px,rgb(218,231,239) 817px,rgb(220,242,242) 1012px,rgb(224,247,243) 1312px,rgb(225,247,244) 1634px)"></div>
<div class="abs" style="left:0;top:800px;width:1633px;height:10px;background:linear-gradient(90deg,rgb(238,246,247) 0px,rgb(233,240,243) 212px,rgb(226,232,242) 472px,rgb(223,229,241) 662px,rgb(219,232,240) 817px,rgb(220,242,242) 1012px,rgb(224,247,243) 1312px,rgb(225,247,244) 1634px)"></div>
<div class="abs" style="left:0;top:810px;width:1633px;height:10px;background:linear-gradient(90deg,rgb(239,246,247) 0px,rgb(233,240,243) 212px,rgb(227,232,242) 472px,rgb(223,230,242) 662px,rgb(220,232,240) 817px,rgb(221,242,242) 1012px,rgb(224,247,243) 1312px,rgb(225,247,244) 1634px)"></div>
<div class="abs" style="left:0;top:820px;width:1633px;height:10px;background:linear-gradient(90deg,rgb(239,246,247) 0px,rgb(234,241,244) 212px,rgb(227,232,242) 472px,rgb(224,230,242) 662px,rgb(221,233,241) 817px,rgb(221,243,243) 1012px,rgb(224,247,243) 1312px,rgb(225,247,244) 1634px)"></div>
<div class="abs" style="left:0;top:830px;width:1633px;height:10px;background:linear-gradient(90deg,rgb(239,246,247) 0px,rgb(234,241,244) 212px,rgb(228,232,242) 472px,rgb(225,231,242) 662px,rgb(221,233,241) 817px,rgb(221,243,243) 1012px,rgb(224,247,243) 1312px,rgb(225,247,244) 1634px)"></div>
<div class="abs" style="left:0;top:840px;width:1633px;height:10px;background:linear-gradient(90deg,rgb(239,247,247) 0px,rgb(235,241,244) 212px,rgb(228,233,243) 472px,rgb(225,231,242) 662px,rgb(222,234,241) 817px,rgb(221,243,243) 1012px,rgb(224,247,243) 1312px,rgb(225,247,244) 1634px)"></div>
<div class="abs" style="left:0;top:850px;width:1633px;height:10px;background:linear-gradient(90deg,rgb(240,247,247) 0px,rgb(235,241,244) 212px,rgb(229,233,243) 472px,rgb(226,231,243) 662px,rgb(223,234,242) 817px,rgb(222,243,243) 1012px,rgb(224,247,244) 1312px,rgb(225,247,244) 1634px)"></div>
<div class="abs" style="left:0;top:860px;width:1633px;height:10px;background:linear-gradient(90deg,rgb(240,247,247) 0px,rgb(235,242,244) 212px,rgb(229,233,243) 472px,rgb(226,232,243) 662px,rgb(224,235,242) 817px,rgb(222,244,243) 1012px,rgb(224,247,244) 1312px,rgb(225,247,244) 1634px)"></div>
<div class="abs" style="left:0;top:870px;width:1633px;height:10px;background:linear-gradient(90deg,rgb(240,247,247) 0px,rgb(236,242,244) 212px,rgb(230,234,243) 472px,rgb(227,232,243) 662px,rgb(224,235,242) 817px,rgb(222,244,243) 1012px,rgb(224,247,244) 1312px,rgb(225,247,244) 1634px)"></div>
<div class="abs" style="left:0;top:880px;width:1633px;height:10px;background:linear-gradient(90deg,rgb(240,247,248) 0px,rgb(236,242,244) 212px,rgb(230,234,243) 472px,rgb(228,232,243) 662px,rgb(225,236,243) 817px,rgb(223,244,243) 1012px,rgb(224,247,244) 1312px,rgb(224,247,244) 1634px)"></div>
<div class="abs" style="left:0;top:890px;width:1633px;height:10px;background:linear-gradient(90deg,rgb(240,247,248) 0px,rgb(237,242,245) 212px,rgb(231,234,243) 472px,rgb(228,233,243) 662px,rgb(226,236,243) 817px,rgb(223,244,244) 1012px,rgb(224,247,244) 1312px,rgb(224,247,244) 1634px)"></div>
<div class="abs" style="left:0;top:900px;width:1633px;height:10px;background:linear-gradient(90deg,rgb(241,248,248) 0px,rgb(237,243,245) 212px,rgb(231,234,244) 472px,rgb(229,233,244) 662px,rgb(227,237,243) 817px,rgb(223,245,244) 1012px,rgb(224,247,244) 1312px,rgb(224,247,244) 1634px)"></div>
<div class="abs" style="left:0;top:910px;width:1633px;height:10px;background:linear-gradient(90deg,rgb(241,248,248) 0px,rgb(238,243,245) 212px,rgb(232,235,244) 472px,rgb(229,234,244) 662px,rgb(227,238,244) 817px,rgb(224,245,244) 1012px,rgb(224,247,244) 1312px,rgb(224,247,244) 1634px)"></div>
<div class="abs" style="left:0;top:920px;width:1633px;height:10px;background:linear-gradient(90deg,rgb(241,248,248) 0px,rgb(238,243,245) 212px,rgb(232,235,244) 472px,rgb(230,234,244) 662px,rgb(228,238,244) 817px,rgb(224,245,244) 1012px,rgb(224,247,244) 1312px,rgb(224,247,244) 1634px)"></div>
<div class="abs" style="left:0;top:0;width:1633px;height:49px;background:#fff"></div>
<div class="abs" style="left:31px;top:12px;font-size:24px;color:#505050;white-space:nowrap">Startseite</div>

<svg class="abs" style="left:1558px;top:19px" width="16" height="14" viewBox="0 0 16 14"><rect x="1.2" y="1.7" width="13.6" height="10.6" rx="1.6" stroke="#4a4f5c" stroke-width="1.5" fill="none"/><path d="M1.8 3 L8 7.6 L14.2 3" stroke="#4a4f5c" stroke-width="1.5" fill="none"/></svg>
<svg class="abs" style="left:1586px;top:18px" width="16" height="16" viewBox="0 0 16 16"><circle cx="8" cy="8" r="6.6" stroke="#4a4f5c" stroke-width="1.5" fill="none"/><path d="M5.9 6.2 Q5.9 4.2 8 4.2 Q10.1 4.2 10.1 6 Q10.1 7.3 8.6 7.9 Q8 8.2 8 9.3" stroke="#4a4f5c" stroke-width="1.5" fill="none" stroke-linecap="round"/><circle cx="8" cy="11.6" r="0.95" fill="#4a4f5c"/></svg>
<!-- tabs -->
<div class="abs" style="left:34px;top:74px;width:1567px;height:40px;border-radius:6px;background:#fff"></div>
<div class="abs" style="left:58px;top:87px;font-size:12px;color:#8a91a6;white-space:nowrap">Einstieg</div>
<div class="abs" style="left:133px;top:87px;font-size:12px;color:#8a91a6;white-space:nowrap">Arbeitsplatz</div>
<div class="abs" style="left:227px;top:87px;font-size:12px;color:#8a91a6;white-space:nowrap">Business-Info</div>
<div class="abs" style="left:326px;top:86px;font-size:12px;font-weight:bold;color:#4352a8;white-space:nowrap">Management</div>
<div class="abs" style="left:326px;top:112px;width:73px;height:2px;background:#4352a8"></div>
<div class="abs" style="left:426.8px;top:87px;font-size:12px;color:#8a91a6;white-space:nowrap">Verkauf</div>
<div class="abs" style="left:499.8px;top:87px;font-size:12px;color:#8a91a6;white-space:nowrap">Einkauf</div>
<div class="abs" style="left:571.8px;top:87px;font-size:12px;color:#8a91a6;white-space:nowrap">Lager</div>
<div class="abs" style="left:633.8px;top:87px;font-size:12px;color:#8a91a6;white-space:nowrap">Vertrieb</div>
<div class="abs" style="left:707.8px;top:87px;font-size:12px;color:#8a91a6;white-space:nowrap">Webportal</div>
<div class="abs" style="left:793.8px;top:87px;font-size:12px;color:#8a91a6;white-space:nowrap">Finanzen</div>

<div class="abs" style="left:118.6px;top:86.5px;width:1px;height:13px;background:#dcdfe6"></div>
<div class="abs" style="left:212.2px;top:86.5px;width:1px;height:13px;background:#dcdfe6"></div>
<div class="abs" style="left:315.2px;top:86.5px;width:1px;height:13px;background:#dcdfe6"></div>
<div class="abs" style="left:411.6px;top:86.5px;width:1px;height:13px;background:#dcdfe6"></div>
<div class="abs" style="left:484.0px;top:86.5px;width:1px;height:13px;background:#dcdfe6"></div>
<div class="abs" style="left:556.0px;top:86.5px;width:1px;height:13px;background:#dcdfe6"></div>
<div class="abs" style="left:618.7px;top:86.5px;width:1px;height:13px;background:#dcdfe6"></div>
<div class="abs" style="left:692.0px;top:86.5px;width:1px;height:13px;background:#dcdfe6"></div>
<div class="abs" style="left:779.0px;top:86.5px;width:1px;height:13px;background:#dcdfe6"></div>
<svg class="abs" style="left:1536.9px;top:82.6px" width="22.8" height="22.8" viewBox="0 0 24 24"><path d="M19.933 13.041a8 8 0 1 1 -9.925 -8.788c3.899 -1 7.935 1.007 9.425 4.747" stroke="#474c59" stroke-width="1.75" fill="none" stroke-linecap="round" stroke-linejoin="round"/><path d="M20 4v5h-5" stroke="#474c59" stroke-width="1.75" fill="none" stroke-linecap="round" stroke-linejoin="round"/></svg>
<svg class="abs" style="left:1564.9px;top:82.0px" width="24" height="24" viewBox="0 0 24 24"><path d="M12.00 3.80 C13.68 3.80 12.67 5.92 14.80 7.15 C16.93 8.38 18.26 6.45 19.10 7.90 C19.94 9.35 17.60 9.54 17.60 12.00 C17.60 14.46 19.94 14.65 19.10 16.10 C18.26 17.55 16.93 15.62 14.80 16.85 C12.67 18.08 13.68 20.20 12.00 20.20 C10.32 20.20 11.33 18.08 9.20 16.85 C7.07 15.62 5.74 17.55 4.90 16.10 C4.06 14.65 6.40 14.46 6.40 12.00 C6.40 9.54 4.06 9.35 4.90 7.90 C5.74 6.45 7.07 8.38 9.20 7.15 C11.33 5.92 10.32 3.80 12.00 3.80Z" stroke="#474c59" stroke-width="1.6" fill="none"/><circle cx="12" cy="12" r="2.6" stroke="#474c59" stroke-width="1.6" fill="none"/></svg>
<div class="card" style="left:34px;top:120px;width:936px;height:254px"></div>
<div class="ct" style="left:50px;top:135px">Periodenumsatz</div>
<svg class="abs" style="left:925.5px;top:138.0px" width="18" height="12" viewBox="0 0 18 12"><circle cx="5" cy="8" r="2.8" fill="#474747"/><circle cx="5" cy="8" r="0.9" fill="#9a9a9a"/><circle cx="12" cy="5.8" r="3.25" fill="#474747"/><rect x="11.25" y="1.9" width="1.5" height="1.4" fill="#474747" transform="rotate(0 12 5.8)"/><rect x="11.25" y="1.9" width="1.5" height="1.4" fill="#474747" transform="rotate(45 12 5.8)"/><rect x="11.25" y="1.9" width="1.5" height="1.4" fill="#474747" transform="rotate(90 12 5.8)"/><rect x="11.25" y="1.9" width="1.5" height="1.4" fill="#474747" transform="rotate(135 12 5.8)"/><rect x="11.25" y="1.9" width="1.5" height="1.4" fill="#474747" transform="rotate(180 12 5.8)"/><rect x="11.25" y="1.9" width="1.5" height="1.4" fill="#474747" transform="rotate(225 12 5.8)"/><rect x="11.25" y="1.9" width="1.5" height="1.4" fill="#474747" transform="rotate(270 12 5.8)"/><rect x="11.25" y="1.9" width="1.5" height="1.4" fill="#474747" transform="rotate(315 12 5.8)"/><circle cx="12" cy="5.8" r="1.2" fill="#9a9a9a"/></svg>
<div class="card" style="left:978px;top:120px;width:259px;height:254px"></div>
<div class="ct" style="left:994px;top:135px">Finanzüberblick</div>
<svg class="abs" style="left:1192.5px;top:138.0px" width="18" height="12" viewBox="0 0 18 12"><circle cx="5" cy="8" r="2.8" fill="#474747"/><circle cx="5" cy="8" r="0.9" fill="#9a9a9a"/><circle cx="12" cy="5.8" r="3.25" fill="#474747"/><rect x="11.25" y="1.9" width="1.5" height="1.4" fill="#474747" transform="rotate(0 12 5.8)"/><rect x="11.25" y="1.9" width="1.5" height="1.4" fill="#474747" transform="rotate(45 12 5.8)"/><rect x="11.25" y="1.9" width="1.5" height="1.4" fill="#474747" transform="rotate(90 12 5.8)"/><rect x="11.25" y="1.9" width="1.5" height="1.4" fill="#474747" transform="rotate(135 12 5.8)"/><rect x="11.25" y="1.9" width="1.5" height="1.4" fill="#474747" transform="rotate(180 12 5.8)"/><rect x="11.25" y="1.9" width="1.5" height="1.4" fill="#474747" transform="rotate(225 12 5.8)"/><rect x="11.25" y="1.9" width="1.5" height="1.4" fill="#474747" transform="rotate(270 12 5.8)"/><rect x="11.25" y="1.9" width="1.5" height="1.4" fill="#474747" transform="rotate(315 12 5.8)"/><circle cx="12" cy="5.8" r="1.2" fill="#9a9a9a"/></svg>
<div class="card" style="left:1245px;top:120px;width:354px;height:254px"></div>
<div class="ct" style="left:1261px;top:135px">Neukundenanteil</div>
<svg class="abs" style="left:1554.5px;top:138.0px" width="18" height="12" viewBox="0 0 18 12"><circle cx="5" cy="8" r="2.8" fill="#474747"/><circle cx="5" cy="8" r="0.9" fill="#9a9a9a"/><circle cx="12" cy="5.8" r="3.25" fill="#474747"/><rect x="11.25" y="1.9" width="1.5" height="1.4" fill="#474747" transform="rotate(0 12 5.8)"/><rect x="11.25" y="1.9" width="1.5" height="1.4" fill="#474747" transform="rotate(45 12 5.8)"/><rect x="11.25" y="1.9" width="1.5" height="1.4" fill="#474747" transform="rotate(90 12 5.8)"/><rect x="11.25" y="1.9" width="1.5" height="1.4" fill="#474747" transform="rotate(135 12 5.8)"/><rect x="11.25" y="1.9" width="1.5" height="1.4" fill="#474747" transform="rotate(180 12 5.8)"/><rect x="11.25" y="1.9" width="1.5" height="1.4" fill="#474747" transform="rotate(225 12 5.8)"/><rect x="11.25" y="1.9" width="1.5" height="1.4" fill="#474747" transform="rotate(270 12 5.8)"/><rect x="11.25" y="1.9" width="1.5" height="1.4" fill="#474747" transform="rotate(315 12 5.8)"/><circle cx="12" cy="5.8" r="1.2" fill="#9a9a9a"/></svg>
<div class="card" style="left:34px;top:382px;width:527px;height:255px"></div>
<div class="ct" style="left:50px;top:397px">Umsatzübersicht</div>
<svg class="abs" style="left:516.5px;top:400.0px" width="18" height="12" viewBox="0 0 18 12"><circle cx="5" cy="8" r="2.8" fill="#474747"/><circle cx="5" cy="8" r="0.9" fill="#9a9a9a"/><circle cx="12" cy="5.8" r="3.25" fill="#474747"/><rect x="11.25" y="1.9" width="1.5" height="1.4" fill="#474747" transform="rotate(0 12 5.8)"/><rect x="11.25" y="1.9" width="1.5" height="1.4" fill="#474747" transform="rotate(45 12 5.8)"/><rect x="11.25" y="1.9" width="1.5" height="1.4" fill="#474747" transform="rotate(90 12 5.8)"/><rect x="11.25" y="1.9" width="1.5" height="1.4" fill="#474747" transform="rotate(135 12 5.8)"/><rect x="11.25" y="1.9" width="1.5" height="1.4" fill="#474747" transform="rotate(180 12 5.8)"/><rect x="11.25" y="1.9" width="1.5" height="1.4" fill="#474747" transform="rotate(225 12 5.8)"/><rect x="11.25" y="1.9" width="1.5" height="1.4" fill="#474747" transform="rotate(270 12 5.8)"/><rect x="11.25" y="1.9" width="1.5" height="1.4" fill="#474747" transform="rotate(315 12 5.8)"/><circle cx="12" cy="5.8" r="1.2" fill="#9a9a9a"/></svg>
<div class="card" style="left:569px;top:382px;width:401px;height:255px"></div>
<div class="ct" style="left:585px;top:397px">ABC Kunden</div>
<svg class="abs" style="left:925.5px;top:400.0px" width="18" height="12" viewBox="0 0 18 12"><circle cx="5" cy="8" r="2.8" fill="#474747"/><circle cx="5" cy="8" r="0.9" fill="#9a9a9a"/><circle cx="12" cy="5.8" r="3.25" fill="#474747"/><rect x="11.25" y="1.9" width="1.5" height="1.4" fill="#474747" transform="rotate(0 12 5.8)"/><rect x="11.25" y="1.9" width="1.5" height="1.4" fill="#474747" transform="rotate(45 12 5.8)"/><rect x="11.25" y="1.9" width="1.5" height="1.4" fill="#474747" transform="rotate(90 12 5.8)"/><rect x="11.25" y="1.9" width="1.5" height="1.4" fill="#474747" transform="rotate(135 12 5.8)"/><rect x="11.25" y="1.9" width="1.5" height="1.4" fill="#474747" transform="rotate(180 12 5.8)"/><rect x="11.25" y="1.9" width="1.5" height="1.4" fill="#474747" transform="rotate(225 12 5.8)"/><rect x="11.25" y="1.9" width="1.5" height="1.4" fill="#474747" transform="rotate(270 12 5.8)"/><rect x="11.25" y="1.9" width="1.5" height="1.4" fill="#474747" transform="rotate(315 12 5.8)"/><circle cx="12" cy="5.8" r="1.2" fill="#9a9a9a"/></svg>
<div class="card" style="left:978px;top:382px;width:621px;height:255px"></div>
<div class="ct" style="left:994px;top:397px">Top-Kunden</div>
<svg class="abs" style="left:1554.5px;top:400.0px" width="18" height="12" viewBox="0 0 18 12"><circle cx="5" cy="8" r="2.8" fill="#474747"/><circle cx="5" cy="8" r="0.9" fill="#9a9a9a"/><circle cx="12" cy="5.8" r="3.25" fill="#474747"/><rect x="11.25" y="1.9" width="1.5" height="1.4" fill="#474747" transform="rotate(0 12 5.8)"/><rect x="11.25" y="1.9" width="1.5" height="1.4" fill="#474747" transform="rotate(45 12 5.8)"/><rect x="11.25" y="1.9" width="1.5" height="1.4" fill="#474747" transform="rotate(90 12 5.8)"/><rect x="11.25" y="1.9" width="1.5" height="1.4" fill="#474747" transform="rotate(135 12 5.8)"/><rect x="11.25" y="1.9" width="1.5" height="1.4" fill="#474747" transform="rotate(180 12 5.8)"/><rect x="11.25" y="1.9" width="1.5" height="1.4" fill="#474747" transform="rotate(225 12 5.8)"/><rect x="11.25" y="1.9" width="1.5" height="1.4" fill="#474747" transform="rotate(270 12 5.8)"/><rect x="11.25" y="1.9" width="1.5" height="1.4" fill="#474747" transform="rotate(315 12 5.8)"/><circle cx="12" cy="5.8" r="1.2" fill="#9a9a9a"/></svg>
<div class="card" style="left:34px;top:645px;width:936px;height:254px"></div>
<div class="ct" style="left:50px;top:660px">Auftragsbestandsübersicht nach Wochen</div>
<svg class="abs" style="left:925.5px;top:663.0px" width="18" height="12" viewBox="0 0 18 12"><circle cx="5" cy="8" r="2.8" fill="#474747"/><circle cx="5" cy="8" r="0.9" fill="#9a9a9a"/><circle cx="12" cy="5.8" r="3.25" fill="#474747"/><rect x="11.25" y="1.9" width="1.5" height="1.4" fill="#474747" transform="rotate(0 12 5.8)"/><rect x="11.25" y="1.9" width="1.5" height="1.4" fill="#474747" transform="rotate(45 12 5.8)"/><rect x="11.25" y="1.9" width="1.5" height="1.4" fill="#474747" transform="rotate(90 12 5.8)"/><rect x="11.25" y="1.9" width="1.5" height="1.4" fill="#474747" transform="rotate(135 12 5.8)"/><rect x="11.25" y="1.9" width="1.5" height="1.4" fill="#474747" transform="rotate(180 12 5.8)"/><rect x="11.25" y="1.9" width="1.5" height="1.4" fill="#474747" transform="rotate(225 12 5.8)"/><rect x="11.25" y="1.9" width="1.5" height="1.4" fill="#474747" transform="rotate(270 12 5.8)"/><rect x="11.25" y="1.9" width="1.5" height="1.4" fill="#474747" transform="rotate(315 12 5.8)"/><circle cx="12" cy="5.8" r="1.2" fill="#9a9a9a"/></svg>
<div class="card" style="left:978px;top:645px;width:621px;height:254px"></div>
<div class="ct" style="left:994px;top:660px">Top-Artikel</div>
<svg class="abs" style="left:1554.5px;top:663.0px" width="18" height="12" viewBox="0 0 18 12"><circle cx="5" cy="8" r="2.8" fill="#474747"/><circle cx="5" cy="8" r="0.9" fill="#9a9a9a"/><circle cx="12" cy="5.8" r="3.25" fill="#474747"/><rect x="11.25" y="1.9" width="1.5" height="1.4" fill="#474747" transform="rotate(0 12 5.8)"/><rect x="11.25" y="1.9" width="1.5" height="1.4" fill="#474747" transform="rotate(45 12 5.8)"/><rect x="11.25" y="1.9" width="1.5" height="1.4" fill="#474747" transform="rotate(90 12 5.8)"/><rect x="11.25" y="1.9" width="1.5" height="1.4" fill="#474747" transform="rotate(135 12 5.8)"/><rect x="11.25" y="1.9" width="1.5" height="1.4" fill="#474747" transform="rotate(180 12 5.8)"/><rect x="11.25" y="1.9" width="1.5" height="1.4" fill="#474747" transform="rotate(225 12 5.8)"/><rect x="11.25" y="1.9" width="1.5" height="1.4" fill="#474747" transform="rotate(270 12 5.8)"/><rect x="11.25" y="1.9" width="1.5" height="1.4" fill="#474747" transform="rotate(315 12 5.8)"/><circle cx="12" cy="5.8" r="1.2" fill="#9a9a9a"/></svg>
<svg class="abs" style="left:34px;top:120px" width="936" height="254"><line x1="56.0" y1="219.5" x2="818.5" y2="219.5" stroke="#9a9a9a" stroke-width="1"/><line x1="56.0" y1="196.5" x2="818.5" y2="196.5" stroke="#dadada" stroke-width="1"/><line x1="56.0" y1="172.5" x2="818.5" y2="172.5" stroke="#dadada" stroke-width="1"/><line x1="56.0" y1="149.5" x2="818.5" y2="149.5" stroke="#dadada" stroke-width="1"/><line x1="56.0" y1="125.5" x2="818.5" y2="125.5" stroke="#dadada" stroke-width="1"/><line x1="56.0" y1="102.5" x2="818.5" y2="102.5" stroke="#dadada" stroke-width="1"/><line x1="56.0" y1="78.5" x2="818.5" y2="78.5" stroke="#dadada" stroke-width="1"/><line x1="56.0" y1="55.5" x2="818.5" y2="55.5" stroke="#dadada" stroke-width="1"/><line x1="62.5" y1="55.0" x2="62.5" y2="230.0" stroke="#9a9a9a" stroke-width="1"/><line x1="125.5" y1="55.0" x2="125.5" y2="230.0" stroke="#dadada" stroke-width="1"/><line x1="188.5" y1="55.0" x2="188.5" y2="230.0" stroke="#dadada" stroke-width="1"/><line x1="251.5" y1="55.0" x2="251.5" y2="230.0" stroke="#dadada" stroke-width="1"/><line x1="314.5" y1="55.0" x2="314.5" y2="230.0" stroke="#dadada" stroke-width="1"/><line x1="377.5" y1="55.0" x2="377.5" y2="230.0" stroke="#dadada" stroke-width="1"/><line x1="440.5" y1="55.0" x2="440.5" y2="230.0" stroke="#dadada" stroke-width="1"/><line x1="503.5" y1="55.0" x2="503.5" y2="230.0" stroke="#dadada" stroke-width="1"/><line x1="566.5" y1="55.0" x2="566.5" y2="230.0" stroke="#dadada" stroke-width="1"/><line x1="629.5" y1="55.0" x2="629.5" y2="230.0" stroke="#dadada" stroke-width="1"/><line x1="692.5" y1="55.0" x2="692.5" y2="230.0" stroke="#dadada" stroke-width="1"/><line x1="755.5" y1="55.0" x2="755.5" y2="230.0" stroke="#dadada" stroke-width="1"/><line x1="818.5" y1="55.0" x2="818.5" y2="230.0" stroke="#dadada" stroke-width="1"/><rect x="69" y="70.69999999999999" width="15.5" height="148.3" fill="#88c6c0"/><rect x="320.5" y="218.5" width="16.5" height="1.2" fill="#7fbdb6"/></svg>
<div class="abs" style="right:1547.0px;top:168.5px;font-size:12px;color:#666;white-space:nowrap;">70000</div>
<div class="abs" style="right:1547.0px;top:191.9px;font-size:12px;color:#666;white-space:nowrap;">60000</div>
<div class="abs" style="right:1547.0px;top:215.4px;font-size:12px;color:#666;white-space:nowrap;">50000</div>
<div class="abs" style="right:1547.0px;top:238.8px;font-size:12px;color:#666;white-space:nowrap;">40000</div>
<div class="abs" style="right:1547.0px;top:262.2px;font-size:12px;color:#666;white-space:nowrap;">30000</div>
<div class="abs" style="right:1547.0px;top:285.6px;font-size:12px;color:#666;white-space:nowrap;">20000</div>
<div class="abs" style="right:1547.0px;top:309.1px;font-size:12px;color:#666;white-space:nowrap;">10000</div>
<div class="abs" style="right:1547.0px;top:332.5px;font-size:12px;color:#666;white-space:nowrap;">0</div>
<div class="abs" style="left:98.0px;top:349px;width:60px;text-align:center;font-size:12px;color:#666">Jan</div>
<div class="abs" style="left:161.0px;top:349px;width:60px;text-align:center;font-size:12px;color:#666">Feb</div>
<div class="abs" style="left:224.0px;top:349px;width:60px;text-align:center;font-size:12px;color:#666">Mär</div>
<div class="abs" style="left:287.0px;top:349px;width:60px;text-align:center;font-size:12px;color:#666">Apr</div>
<div class="abs" style="left:350.0px;top:349px;width:60px;text-align:center;font-size:12px;color:#666">Mai</div>
<div class="abs" style="left:413.0px;top:349px;width:60px;text-align:center;font-size:12px;color:#666">Jun</div>
<div class="abs" style="left:476.0px;top:349px;width:60px;text-align:center;font-size:12px;color:#666">Jul</div>
<div class="abs" style="left:539.0px;top:349px;width:60px;text-align:center;font-size:12px;color:#666">Aug</div>
<div class="abs" style="left:602.0px;top:349px;width:60px;text-align:center;font-size:12px;color:#666">Sep</div>
<div class="abs" style="left:665.0px;top:349px;width:60px;text-align:center;font-size:12px;color:#666">Okt</div>
<div class="abs" style="left:728.0px;top:349px;width:60px;text-align:center;font-size:12px;color:#666">Nov</div>
<div class="abs" style="left:791.0px;top:349px;width:60px;text-align:center;font-size:12px;color:#666">Dez</div>
<div class="abs" style="left:862.5px;top:229.4px;width:40px;height:12px;background:#88c6c0"></div>
<div class="abs" style="left:908.5px;top:227.9px;font-size:12px;color:#666;white-space:nowrap;">Umsatz</div>
<div class="abs" style="left:862.5px;top:251.6px;width:40px;height:12px;background:#d8eb8e"></div>
<div class="abs" style="left:908.5px;top:250.1px;font-size:12px;color:#666;white-space:nowrap;">Vorjahr</div>
<div class="abs" style="left:862.5px;top:273.8px;width:40px;height:12px;background:#7b8ec8"></div>
<div class="abs" style="left:908.5px;top:272.3px;font-size:12px;color:#666;white-space:nowrap;">Plan</div>
<div class="abs" style="left:990.0px;top:168.0px;font-size:12px;color:#222;white-space:nowrap;">Kontostand</div>
<div class="abs" style="right:510.0px;top:182.0px;font-size:29px;font-weight:bold;color:#4454a8;white-space:nowrap;">30</div>
<div class="abs" style="left:990.0px;top:224.0px;font-size:12px;color:#222;white-space:nowrap;">Offene Posten Kunden</div>
<div class="abs" style="right:510.0px;top:237.0px;font-size:30px;font-weight:bold;color:#c8e26c;white-space:nowrap;">7.770.146</div>
<div class="abs" style="left:990.0px;top:279.5px;font-size:12px;color:#222;white-space:nowrap;">Offene Posten Lieferanten</div>
<div class="abs" style="right:510.0px;top:293.0px;font-size:30px;font-weight:bold;color:#da625b;white-space:nowrap;">59.092</div>
<div class="abs" style="left:1257.0px;top:168.0px;font-size:12px;color:#1d1d1d;white-space:nowrap;">Neue Kunden (1 - 20,0%)</div>
<div class="abs" style="left:1257px;top:188px;width:243px;height:6px;background:#ebebeb"></div>
<div class="abs" style="left:1257px;top:188px;width:48.6px;height:6px;background:#4456a8"></div>
<div class="abs" style="left:1257.0px;top:208.0px;font-size:12px;color:#1d1d1d;white-space:nowrap;">Bestandskunden (4 - 80,0%)</div>
<div class="abs" style="left:1257px;top:228px;width:243px;height:6px;background:#ebebeb"></div>
<div class="abs" style="left:1257px;top:228px;width:194.4px;height:6px;background:#f2c94a"></div>
<div class="abs" style="left:1257.0px;top:248.0px;font-size:12px;color:#1d1d1d;white-space:nowrap;">Umsatz neue Kunden (4 € - 0,0%)</div>
<div class="abs" style="left:1257px;top:268px;width:243px;height:6px;background:#ebebeb"></div>
<div class="abs" style="left:1257.0px;top:288.0px;font-size:12px;color:#1d1d1d;white-space:nowrap;">Umsatz Bestandskunden (63.725 € - 100,0%)</div>
<div class="abs" style="left:1257px;top:308px;width:243px;height:6px;background:#ebebeb"></div>
<div class="abs" style="left:1257px;top:308px;width:243.0px;height:6px;background:#fde42a"></div>
<div class="abs" style="left:46.60000000000002px;top:430px;width:502.4px;height:202px;background:#fff;border-radius:5px 5px 0 0"></div><div class="abs" style="left:46.60000000000002px;top:430px;width:502.4px;height:30px;background:#f2f2f2;border-radius:5px 5px 0 0"></div>
<svg class="abs" style="left:537px;top:440px" width="11" height="10" viewBox="0 0 11 10"><path d="M0 1.5 H11 M0 5 H11 M0 8.5 H11" stroke="#b5b5b5" stroke-width="1"/></svg>
<div class="abs" style="left:57.8px;top:437.5px;font-size:12px;font-weight:bold;color:#111;white-space:nowrap;">Zeitraum</div>
<div class="abs" style="right:1342.5px;top:437.5px;font-size:12px;font-weight:bold;color:#111;white-space:nowrap;">Umsatz anteilig</div>
<div class="abs" style="right:1242.5px;top:437.5px;font-size:12px;font-weight:bold;color:#111;white-space:nowrap;">Vorjahr anteilig</div>
<div class="abs" style="right:1141.9px;top:437.5px;font-size:12px;font-weight:bold;color:#111;white-space:nowrap;">Vorjahr gesamt</div>
<div class="abs" style="left:497.9px;top:437.5px;font-size:12px;font-weight:bold;color:#111;white-space:nowrap;">Wkz</div>
<div class="abs" style="left:55.89999999999998px;top:489.79999999999995px;width:479px;height:29px;background:#f5f6fa"></div>
<div class="abs" style="left:57.8px;top:468.0px;font-size:12px;color:#222;white-space:nowrap;">Umsatz heute</div>
<div class="abs" style="right:1340.3px;top:468.0px;font-size:12px;color:#222;white-space:nowrap;">0,00</div>
<div class="abs" style="right:1240.2px;top:468.0px;font-size:12px;color:#222;white-space:nowrap;">0,00</div>
<div class="abs" style="right:1140.2px;top:468.0px;font-size:12px;color:#222;white-space:nowrap;">0,00</div>
<div class="abs" style="left:497.0px;top:468.0px;font-size:12px;color:#222;white-space:nowrap;">EUR</div>
<div class="abs" style="left:57.8px;top:498.0px;font-size:12px;color:#222;white-space:nowrap;">Umsatz Monat</div>
<div class="abs" style="right:1340.3px;top:498.0px;font-size:12px;color:#222;white-space:nowrap;">0,00</div>
<div class="abs" style="right:1240.2px;top:498.0px;font-size:12px;color:#222;white-space:nowrap;">0,00</div>
<div class="abs" style="right:1140.2px;top:498.0px;font-size:12px;color:#222;white-space:nowrap;">37,76</div>
<div class="abs" style="left:497.0px;top:498.0px;font-size:12px;color:#222;white-space:nowrap;">EUR</div>
<div class="abs" style="left:57.8px;top:528.0px;font-size:12px;color:#222;white-space:nowrap;">Umsatz Jahr</div>
<div class="abs" style="right:1340.3px;top:528.0px;font-size:12px;color:#222;white-space:nowrap;">63.729,58</div>
<div class="abs" style="right:1240.2px;top:528.0px;font-size:12px;color:#222;white-space:nowrap;">62,25</div>
<div class="abs" style="right:1140.2px;top:528.0px;font-size:12px;color:#222;white-space:nowrap;">100,01</div>
<div class="abs" style="left:497.0px;top:528.0px;font-size:12px;color:#222;white-space:nowrap;">EUR</div>
<svg class="abs" style="left:569px;top:382px" width="401" height="255"><path d="M122.40 49.40 A99.2 99.2 0 0 1 140.37 51.04 L136.58 71.59 A78.3 78.3 0 0 0 122.40 70.30 Z" fill="#88c6c0" stroke="#fff" stroke-width="1.5"/><path d="M140.37 51.04 A99.2 99.2 0 0 1 149.16 53.08 L143.53 73.20 A78.3 78.3 0 0 0 136.58 71.59 Z" fill="#d8eb97" stroke="#fff" stroke-width="1.5"/><path d="M149.16 53.08 A99.2 99.2 0 1 1 78.78 59.51 L87.97 78.28 A78.3 78.3 0 1 0 143.53 73.20 Z" fill="#7b8ec8" stroke="#fff" stroke-width="1.5"/><path d="M78.78 59.51 A99.2 99.2 0 0 1 122.40 49.40 L122.40 70.30 A78.3 78.3 0 0 0 87.97 78.28 Z" fill="#f6d95e" stroke="#fff" stroke-width="1.5"/></svg>
<div class="abs" style="left:812px;top:492.8px;width:38px;height:10px;background:#88c6c0"></div>
<div class="abs" style="left:857.2px;top:490.3px;font-size:12px;color:#666;white-space:nowrap;">Klasse A (2)</div>
<div class="abs" style="left:812px;top:514.7px;width:38px;height:10px;background:#d8eb97"></div>
<div class="abs" style="left:857.2px;top:512.2px;font-size:12px;color:#666;white-space:nowrap;">Klasse B (1)</div>
<div class="abs" style="left:812px;top:536.6px;width:38px;height:10px;background:#7b8ec8"></div>
<div class="abs" style="left:857.2px;top:534.1px;font-size:12px;color:#666;white-space:nowrap;">Klasse C (61)</div>
<div class="abs" style="left:812px;top:558.5px;width:38px;height:10px;background:#f6d95e"></div>
<div class="abs" style="left:857.2px;top:556.0px;font-size:12px;color:#666;white-space:nowrap;">Unklassifiziert (5)</div>
<div class="abs" style="left:990px;top:430.4px;width:597px;height:200.80000000000007px;background:#fff;border-radius:5px 5px 0 0"></div><div class="abs" style="left:990px;top:430.4px;width:597px;height:29.6px;background:#f2f2f2;border-radius:5px 5px 0 0"></div>
<svg class="abs" style="left:1575px;top:440px" width="11" height="10" viewBox="0 0 11 10"><path d="M0 1.5 H11 M0 5 H11 M0 8.5 H11" stroke="#b5b5b5" stroke-width="1"/></svg>
<div class="abs" style="left:1002.3px;top:437.5px;font-size:12px;font-weight:bold;color:#111;white-space:nowrap;">Kundennr.</div>
<div class="abs" style="left:1098.1px;top:437.5px;font-size:12px;font-weight:bold;color:#111;white-space:nowrap;">Kurzbezeichnung</div>
<div class="abs" style="right:63.3px;top:437.5px;font-size:12px;font-weight:bold;color:#111;white-space:nowrap;">Umsatz</div>
<div class="abs" style="left:990px;top:694.0px;width:597px;height:200.80000000000007px;background:#fff;border-radius:5px 5px 0 0"></div><div class="abs" style="left:990px;top:694.0px;width:597px;height:29.6px;background:#f2f2f2;border-radius:5px 5px 0 0"></div>
<svg class="abs" style="left:1575px;top:703.6px" width="11" height="10" viewBox="0 0 11 10"><path d="M0 1.5 H11 M0 5 H11 M0 8.5 H11" stroke="#b5b5b5" stroke-width="1"/></svg>
<div class="abs" style="left:1002.3px;top:701.1px;font-size:12px;font-weight:bold;color:#111;white-space:nowrap;">Artikelnr.</div>
<div class="abs" style="left:1098.1px;top:701.1px;font-size:12px;font-weight:bold;color:#111;white-space:nowrap;">Kurzbezeichnung</div>
<div class="abs" style="right:63.3px;top:701.1px;font-size:12px;font-weight:bold;color:#111;white-space:nowrap;">Umsatz</div>
<svg class="abs" style="left:34px;top:645px" width="936" height="254"><line x1="59.0" y1="225.5" x2="916.2" y2="225.5" stroke="#9a9a9a" stroke-width="1"/><line x1="59.0" y1="196.5" x2="916.2" y2="196.5" stroke="#d3d3d3" stroke-width="1"/><line x1="59.0" y1="168.5" x2="916.2" y2="168.5" stroke="#d3d3d3" stroke-width="1"/><line x1="59.0" y1="140.5" x2="916.2" y2="140.5" stroke="#d3d3d3" stroke-width="1"/><line x1="59.0" y1="112.5" x2="916.2" y2="112.5" stroke="#d3d3d3" stroke-width="1"/><line x1="59.0" y1="83.5" x2="916.2" y2="83.5" stroke="#d3d3d3" stroke-width="1"/><line x1="59.0" y1="55.5" x2="916.2" y2="55.5" stroke="#d3d3d3" stroke-width="1"/><line x1="68.5" y1="55.0" x2="68.5" y2="234.0" stroke="#9a9a9a" stroke-width="1"/><line x1="95.5" y1="55.0" x2="95.5" y2="234.0" stroke="#d3d3d3" stroke-width="1"/><line x1="122.5" y1="55.0" x2="122.5" y2="234.0" stroke="#d3d3d3" stroke-width="1"/><line x1="149.5" y1="55.0" x2="149.5" y2="234.0" stroke="#d3d3d3" stroke-width="1"/><line x1="176.5" y1="55.0" x2="176.5" y2="234.0" stroke="#d3d3d3" stroke-width="1"/><line x1="203.5" y1="55.0" x2="203.5" y2="234.0" stroke="#d3d3d3" stroke-width="1"/><line x1="230.5" y1="55.0" x2="230.5" y2="234.0" stroke="#d3d3d3" stroke-width="1"/><line x1="257.5" y1="55.0" x2="257.5" y2="234.0" stroke="#d3d3d3" stroke-width="1"/><line x1="285.5" y1="55.0" x2="285.5" y2="234.0" stroke="#d3d3d3" stroke-width="1"/><line x1="312.5" y1="55.0" x2="312.5" y2="234.0" stroke="#d3d3d3" stroke-width="1"/><line x1="339.5" y1="55.0" x2="339.5" y2="234.0" stroke="#d3d3d3" stroke-width="1"/><line x1="366.5" y1="55.0" x2="366.5" y2="234.0" stroke="#d3d3d3" stroke-width="1"/><line x1="393.5" y1="55.0" x2="393.5" y2="234.0" stroke="#d3d3d3" stroke-width="1"/><line x1="420.5" y1="55.0" x2="420.5" y2="234.0" stroke="#d3d3d3" stroke-width="1"/><line x1="447.5" y1="55.0" x2="447.5" y2="234.0" stroke="#d3d3d3" stroke-width="1"/><line x1="474.5" y1="55.0" x2="474.5" y2="234.0" stroke="#d3d3d3" stroke-width="1"/><line x1="501.5" y1="55.0" x2="501.5" y2="234.0" stroke="#d3d3d3" stroke-width="1"/><line x1="528.5" y1="55.0" x2="528.5" y2="234.0" stroke="#d3d3d3" stroke-width="1"/><line x1="555.5" y1="55.0" x2="555.5" y2="234.0" stroke="#d3d3d3" stroke-width="1"/><line x1="582.5" y1="55.0" x2="582.5" y2="234.0" stroke="#d3d3d3" stroke-width="1"/><line x1="609.5" y1="55.0" x2="609.5" y2="234.0" stroke="#d3d3d3" stroke-width="1"/><line x1="636.5" y1="55.0" x2="636.5" y2="234.0" stroke="#d3d3d3" stroke-width="1"/><line x1="663.5" y1="55.0" x2="663.5" y2="234.0" stroke="#d3d3d3" stroke-width="1"/><line x1="690.5" y1="55.0" x2="690.5" y2="234.0" stroke="#d3d3d3" stroke-width="1"/><line x1="717.5" y1="55.0" x2="717.5" y2="234.0" stroke="#d3d3d3" stroke-width="1"/><line x1="744.5" y1="55.0" x2="744.5" y2="234.0" stroke="#d3d3d3" stroke-width="1"/><line x1="771.5" y1="55.0" x2="771.5" y2="234.0" stroke="#d3d3d3" stroke-width="1"/><line x1="798.5" y1="55.0" x2="798.5" y2="234.0" stroke="#d3d3d3" stroke-width="1"/><line x1="826.5" y1="55.0" x2="826.5" y2="234.0" stroke="#d3d3d3" stroke-width="1"/><line x1="853.5" y1="55.0" x2="853.5" y2="234.0" stroke="#d3d3d3" stroke-width="1"/><line x1="880.5" y1="55.0" x2="880.5" y2="234.0" stroke="#d3d3d3" stroke-width="1"/><line x1="907.5" y1="55.0" x2="907.5" y2="234.0" stroke="#d3d3d3" stroke-width="1"/><path d="M68.58 217.35 C72.19 219.61 75.81 224.13 79.43 224.13 C84.41 224.13 89.39 223.43 94.36 223.43 C97.98 223.43 101.60 224.42 105.22 224.42 C107.93 224.42 110.65 222.86 113.36 222.86 C116.08 222.86 118.79 224.28 121.51 224.28 C124.67 224.28 127.84 223.00 131.01 223.00 C133.72 223.00 136.44 224.42 139.15 224.42 C142.32 224.42 145.48 221.59 148.65 221.59 C152.72 221.59 156.79 224.28 160.87 224.28 C162.68 224.28 164.49 223.45 166.30 222.58 C169.64 220.97 172.99 212.26 176.34 212.26 C180.23 212.26 184.12 223.44 188.01 223.57 C193.44 223.75 198.87 223.85 204.30 223.85 C206.56 223.85 208.82 223.32 211.08 222.58 C214.52 221.45 217.96 209.14 221.40 209.14 C224.75 209.14 228.09 222.44 231.44 222.44 C235.06 222.44 238.68 222.15 242.30 222.15 C245.92 222.15 249.54 222.65 253.16 223.00 C256.78 223.36 260.40 224.42 264.02 224.42 C270.35 224.42 276.68 223.85 283.02 223.00 C289.35 222.16 295.68 210.56 302.02 210.56 C305.18 210.56 308.35 223.72 311.52 223.99 C314.68 224.27 317.85 224.42 321.02 224.42 C323.91 224.42 326.81 213.39 329.70 213.39 C332.69 213.39 335.68 223.29 338.66 223.29 C341.38 223.29 344.09 218.23 346.81 210.56 C350.15 201.10 353.50 63.49 356.85 63.49 C360.02 63.49 363.18 224.42 366.35 224.42 C369.34 224.42 372.32 195.71 375.31 195.71 C378.93 195.71 382.55 220.33 386.17 221.87 C389.78 223.42 393.40 224.42 397.02 224.42 C400.64 224.42 404.26 223.85 407.88 223.85 C408.97 223.85 410.05 224.28 411.14 224.28 C414.12 224.28 417.11 81.87 420.10 81.87 C423.71 81.87 427.33 212.60 430.95 216.22 C435.93 221.19 440.91 223.99 445.88 223.99 C455.84 223.99 465.79 223.80 475.74 223.57 C474.35 223.60 472.96 223.85 471.57 223.85 C475.19 223.85 478.81 223.99 482.43 223.99 C485.87 223.99 489.31 213.67 492.74 213.67 C497.00 213.67 501.25 223.64 505.50 223.85 C507.31 223.94 509.12 223.99 510.93 223.99 C513.65 223.99 516.36 208.44 519.07 208.44 C522.06 208.44 525.05 224.28 528.03 224.28 C531.20 224.28 534.37 85.40 537.53 85.40 C540.70 85.40 543.87 224.28 547.03 224.28 C551.74 224.28 556.44 224.28 561.15 224.28 C565.22 224.28 569.29 222.86 573.36 222.86 C576.53 222.86 579.70 224.42 582.86 224.42 C591.46 224.42 600.06 223.85 608.65 223.85 C611.82 223.85 614.99 224.42 618.15 224.42 C621.32 224.42 624.49 221.02 627.65 221.02 C630.82 221.02 633.99 224.28 637.15 224.28 C639.87 224.28 642.58 222.15 645.30 222.15 C649.82 222.15 654.34 224.42 658.87 224.42 C663.39 224.42 667.92 224.37 672.44 224.28 C675.34 224.22 678.23 221.31 681.13 221.31 C684.38 221.31 687.64 224.28 690.90 224.28 C693.79 224.28 696.69 176.62 699.59 176.62 C702.75 176.62 705.92 224.23 709.09 224.28 C715.87 224.37 722.66 224.42 729.44 224.42 C749.35 224.42 769.26 224.37 789.16 224.28 C792.78 224.26 796.40 218.19 800.02 218.19 C805.45 218.19 810.88 224.06 816.31 224.13 C823.54 224.23 830.78 224.28 838.02 224.28 C843.00 224.28 847.97 224.28 852.95 224.28 C859.47 224.28 865.98 201.65 872.50 201.65 C878.20 201.65 883.90 223.33 889.60 223.57 C898.46 223.94 907.33 223.95 916.20 224.13 L916.20 224.70 L68.58 224.70 Z" fill="#5fb3aa" fill-opacity="0.7"/><path d="M68.58 217.35 C72.19 219.61 75.81 224.13 79.43 224.13 C84.41 224.13 89.39 223.43 94.36 223.43 C97.98 223.43 101.60 224.42 105.22 224.42 C107.93 224.42 110.65 222.86 113.36 222.86 C116.08 222.86 118.79 224.28 121.51 224.28 C124.67 224.28 127.84 223.00 131.01 223.00 C133.72 223.00 136.44 224.42 139.15 224.42 C142.32 224.42 145.48 221.59 148.65 221.59 C152.72 221.59 156.79 224.28 160.87 224.28 C162.68 224.28 164.49 223.45 166.30 222.58 C169.64 220.97 172.99 212.26 176.34 212.26 C180.23 212.26 184.12 223.44 188.01 223.57 C193.44 223.75 198.87 223.85 204.30 223.85 C206.56 223.85 208.82 223.32 211.08 222.58 C214.52 221.45 217.96 209.14 221.40 209.14 C224.75 209.14 228.09 222.44 231.44 222.44 C235.06 222.44 238.68 222.15 242.30 222.15 C245.92 222.15 249.54 222.65 253.16 223.00 C256.78 223.36 260.40 224.42 264.02 224.42 C270.35 224.42 276.68 223.85 283.02 223.00 C289.35 222.16 295.68 210.56 302.02 210.56 C305.18 210.56 308.35 223.72 311.52 223.99 C314.68 224.27 317.85 224.42 321.02 224.42 C323.91 224.42 326.81 213.39 329.70 213.39 C332.69 213.39 335.68 223.29 338.66 223.29 C341.38 223.29 344.09 218.23 346.81 210.56 C350.15 201.10 353.50 63.49 356.85 63.49 C360.02 63.49 363.18 224.42 366.35 224.42 C369.34 224.42 372.32 195.71 375.31 195.71 C378.93 195.71 382.55 220.33 386.17 221.87 C389.78 223.42 393.40 224.42 397.02 224.42 C400.64 224.42 404.26 223.85 407.88 223.85 C408.97 223.85 410.05 224.28 411.14 224.28 C414.12 224.28 417.11 81.87 420.10 81.87 C423.71 81.87 427.33 212.60 430.95 216.22 C435.93 221.19 440.91 223.99 445.88 223.99 C455.84 223.99 465.79 223.80 475.74 223.57 C474.35 223.60 472.96 223.85 471.57 223.85 C475.19 223.85 478.81 223.99 482.43 223.99 C485.87 223.99 489.31 213.67 492.74 213.67 C497.00 213.67 501.25 223.64 505.50 223.85 C507.31 223.94 509.12 223.99 510.93 223.99 C513.65 223.99 516.36 208.44 519.07 208.44 C522.06 208.44 525.05 224.28 528.03 224.28 C531.20 224.28 534.37 85.40 537.53 85.40 C540.70 85.40 543.87 224.28 547.03 224.28 C551.74 224.28 556.44 224.28 561.15 224.28 C565.22 224.28 569.29 222.86 573.36 222.86 C576.53 222.86 579.70 224.42 582.86 224.42 C591.46 224.42 600.06 223.85 608.65 223.85 C611.82 223.85 614.99 224.42 618.15 224.42 C621.32 224.42 624.49 221.02 627.65 221.02 C630.82 221.02 633.99 224.28 637.15 224.28 C639.87 224.28 642.58 222.15 645.30 222.15 C649.82 222.15 654.34 224.42 658.87 224.42 C663.39 224.42 667.92 224.37 672.44 224.28 C675.34 224.22 678.23 221.31 681.13 221.31 C684.38 221.31 687.64 224.28 690.90 224.28 C693.79 224.28 696.69 176.62 699.59 176.62 C702.75 176.62 705.92 224.23 709.09 224.28 C715.87 224.37 722.66 224.42 729.44 224.42 C749.35 224.42 769.26 224.37 789.16 224.28 C792.78 224.26 796.40 218.19 800.02 218.19 C805.45 218.19 810.88 224.06 816.31 224.13 C823.54 224.23 830.78 224.28 838.02 224.28 C843.00 224.28 847.97 224.28 852.95 224.28 C859.47 224.28 865.98 201.65 872.50 201.65 C878.20 201.65 883.90 223.33 889.60 223.57 C898.46 223.94 907.33 223.95 916.20 224.13" fill="none" stroke="#6dbbb3" stroke-width="2.7" stroke-linejoin="round"/></svg>
<div class="abs" style="right:1540.0px;top:693.0px;font-size:12px;color:#666;white-space:nowrap;">120000</div>
<div class="abs" style="right:1540.0px;top:721.1px;font-size:12px;color:#666;white-space:nowrap;">100000</div>
<div class="abs" style="right:1540.0px;top:749.2px;font-size:12px;color:#666;white-space:nowrap;">80000</div>
<div class="abs" style="right:1540.0px;top:777.3px;font-size:12px;color:#666;white-space:nowrap;">60000</div>
<div class="abs" style="right:1540.0px;top:805.4px;font-size:12px;color:#666;white-space:nowrap;">40000</div>
<div class="abs" style="right:1540.0px;top:833.5px;font-size:12px;color:#666;white-space:nowrap;">20000</div>
<div class="abs" style="right:1540.0px;top:861.6px;font-size:12px;color:#666;white-space:nowrap;">0</div>
<div class="abs" style="left:88.6px;top:877.0px;width:15px;height:14px;font-size:12px;color:#666;text-align:right;line-height:14px;transform-origin:100% 0;transform:rotate(-45deg) translate(-3px,-6px)">48</div>
<div class="abs" style="left:115.7px;top:877.0px;width:15px;height:14px;font-size:12px;color:#666;text-align:right;line-height:14px;transform-origin:100% 0;transform:rotate(-45deg) translate(-3px,-6px)">03</div>
<div class="abs" style="left:142.7px;top:877.0px;width:15px;height:14px;font-size:12px;color:#666;text-align:right;line-height:14px;transform-origin:100% 0;transform:rotate(-45deg) translate(-3px,-6px)">24</div>
<div class="abs" style="left:169.8px;top:877.0px;width:15px;height:14px;font-size:12px;color:#666;text-align:right;line-height:14px;transform-origin:100% 0;transform:rotate(-45deg) translate(-3px,-6px)">37</div>
<div class="abs" style="left:196.8px;top:877.0px;width:15px;height:14px;font-size:12px;color:#666;text-align:right;line-height:14px;transform-origin:100% 0;transform:rotate(-45deg) translate(-3px,-6px)">49</div>
<div class="abs" style="left:223.9px;top:877.0px;width:15px;height:14px;font-size:12px;color:#666;text-align:right;line-height:14px;transform-origin:100% 0;transform:rotate(-45deg) translate(-3px,-6px)">49</div>
<div class="abs" style="left:250.9px;top:877.0px;width:15px;height:14px;font-size:12px;color:#666;text-align:right;line-height:14px;transform-origin:100% 0;transform:rotate(-45deg) translate(-3px,-6px)">21</div>
<div class="abs" style="left:278.0px;top:877.0px;width:15px;height:14px;font-size:12px;color:#666;text-align:right;line-height:14px;transform-origin:100% 0;transform:rotate(-45deg) translate(-3px,-6px)">18</div>
<div class="abs" style="left:305.0px;top:877.0px;width:15px;height:14px;font-size:12px;color:#666;text-align:right;line-height:14px;transform-origin:100% 0;transform:rotate(-45deg) translate(-3px,-6px)">34</div>
<div class="abs" style="left:332.1px;top:877.0px;width:15px;height:14px;font-size:12px;color:#666;text-align:right;line-height:14px;transform-origin:100% 0;transform:rotate(-45deg) translate(-3px,-6px)">32</div>
<div class="abs" style="left:359.1px;top:877.0px;width:15px;height:14px;font-size:12px;color:#666;text-align:right;line-height:14px;transform-origin:100% 0;transform:rotate(-45deg) translate(-3px,-6px)">43</div>
<div class="abs" style="left:386.2px;top:877.0px;width:15px;height:14px;font-size:12px;color:#666;text-align:right;line-height:14px;transform-origin:100% 0;transform:rotate(-45deg) translate(-3px,-6px)">48</div>
<div class="abs" style="left:413.2px;top:877.0px;width:15px;height:14px;font-size:12px;color:#666;text-align:right;line-height:14px;transform-origin:100% 0;transform:rotate(-45deg) translate(-3px,-6px)">03</div>
<div class="abs" style="left:440.2px;top:877.0px;width:15px;height:14px;font-size:12px;color:#666;text-align:right;line-height:14px;transform-origin:100% 0;transform:rotate(-45deg) translate(-3px,-6px)">06</div>
<div class="abs" style="left:467.3px;top:877.0px;width:15px;height:14px;font-size:12px;color:#666;text-align:right;line-height:14px;transform-origin:100% 0;transform:rotate(-45deg) translate(-3px,-6px)">10</div>
<div class="abs" style="left:494.4px;top:877.0px;width:15px;height:14px;font-size:12px;color:#666;text-align:right;line-height:14px;transform-origin:100% 0;transform:rotate(-45deg) translate(-3px,-6px)">17</div>
<div class="abs" style="left:521.4px;top:877.0px;width:15px;height:14px;font-size:12px;color:#666;text-align:right;line-height:14px;transform-origin:100% 0;transform:rotate(-45deg) translate(-3px,-6px)">21</div>
<div class="abs" style="left:548.5px;top:877.0px;width:15px;height:14px;font-size:12px;color:#666;text-align:right;line-height:14px;transform-origin:100% 0;transform:rotate(-45deg) translate(-3px,-6px)">24</div>
<div class="abs" style="left:575.5px;top:877.0px;width:15px;height:14px;font-size:12px;color:#666;text-align:right;line-height:14px;transform-origin:100% 0;transform:rotate(-45deg) translate(-3px,-6px)">28</div>
<div class="abs" style="left:602.6px;top:877.0px;width:15px;height:14px;font-size:12px;color:#666;text-align:right;line-height:14px;transform-origin:100% 0;transform:rotate(-45deg) translate(-3px,-6px)">36</div>
<div class="abs" style="left:629.6px;top:877.0px;width:15px;height:14px;font-size:12px;color:#666;text-align:right;line-height:14px;transform-origin:100% 0;transform:rotate(-45deg) translate(-3px,-6px)">40</div>
<div class="abs" style="left:656.7px;top:877.0px;width:15px;height:14px;font-size:12px;color:#666;text-align:right;line-height:14px;transform-origin:100% 0;transform:rotate(-45deg) translate(-3px,-6px)">51</div>
<div class="abs" style="left:683.7px;top:877.0px;width:15px;height:14px;font-size:12px;color:#666;text-align:right;line-height:14px;transform-origin:100% 0;transform:rotate(-45deg) translate(-3px,-6px)">05</div>
<div class="abs" style="left:710.8px;top:877.0px;width:15px;height:14px;font-size:12px;color:#666;text-align:right;line-height:14px;transform-origin:100% 0;transform:rotate(-45deg) translate(-3px,-6px)">11</div>
<div class="abs" style="left:737.8px;top:877.0px;width:15px;height:14px;font-size:12px;color:#666;text-align:right;line-height:14px;transform-origin:100% 0;transform:rotate(-45deg) translate(-3px,-6px)">42</div>
<div class="abs" style="left:764.8px;top:877.0px;width:15px;height:14px;font-size:12px;color:#666;text-align:right;line-height:14px;transform-origin:100% 0;transform:rotate(-45deg) translate(-3px,-6px)">34</div>
<div class="abs" style="left:791.9px;top:877.0px;width:15px;height:14px;font-size:12px;color:#666;text-align:right;line-height:14px;transform-origin:100% 0;transform:rotate(-45deg) translate(-3px,-6px)">07</div>
<div class="abs" style="left:819.0px;top:877.0px;width:15px;height:14px;font-size:12px;color:#666;text-align:right;line-height:14px;transform-origin:100% 0;transform:rotate(-45deg) translate(-3px,-6px)">45</div>
<div class="abs" style="left:846.0px;top:877.0px;width:15px;height:14px;font-size:12px;color:#666;text-align:right;line-height:14px;transform-origin:100% 0;transform:rotate(-45deg) translate(-3px,-6px)">48</div>
<div class="abs" style="left:873.1px;top:877.0px;width:15px;height:14px;font-size:12px;color:#666;text-align:right;line-height:14px;transform-origin:100% 0;transform:rotate(-45deg) translate(-3px,-6px)">32</div>
<div class="abs" style="left:900.1px;top:877.0px;width:15px;height:14px;font-size:12px;color:#666;text-align:right;line-height:14px;transform-origin:100% 0;transform:rotate(-45deg) translate(-3px,-6px)">47</div>
<div class="abs" style="left:927.2px;top:877.0px;width:15px;height:14px;font-size:12px;color:#666;text-align:right;line-height:14px;transform-origin:100% 0;transform:rotate(-45deg) translate(-3px,-6px)">48</div>

</div>
<div class="abs" style="z-index:6;left:1009px;top:49px;width:238px;height:40px;border:3px solid #f23b3b;background:#fff;box-shadow:inset 0 4px 4px -1px rgba(0,0,0,0.25),0 3px 4px rgba(0,0,0,0.25)"></div>
<div class="abs" style="z-index:7;left:1019px;top:61px;font-size:12px;color:#505050;white-space:nowrap">Berechtigungssimulation Demo myfactory</div>
</div>
</body></html>
